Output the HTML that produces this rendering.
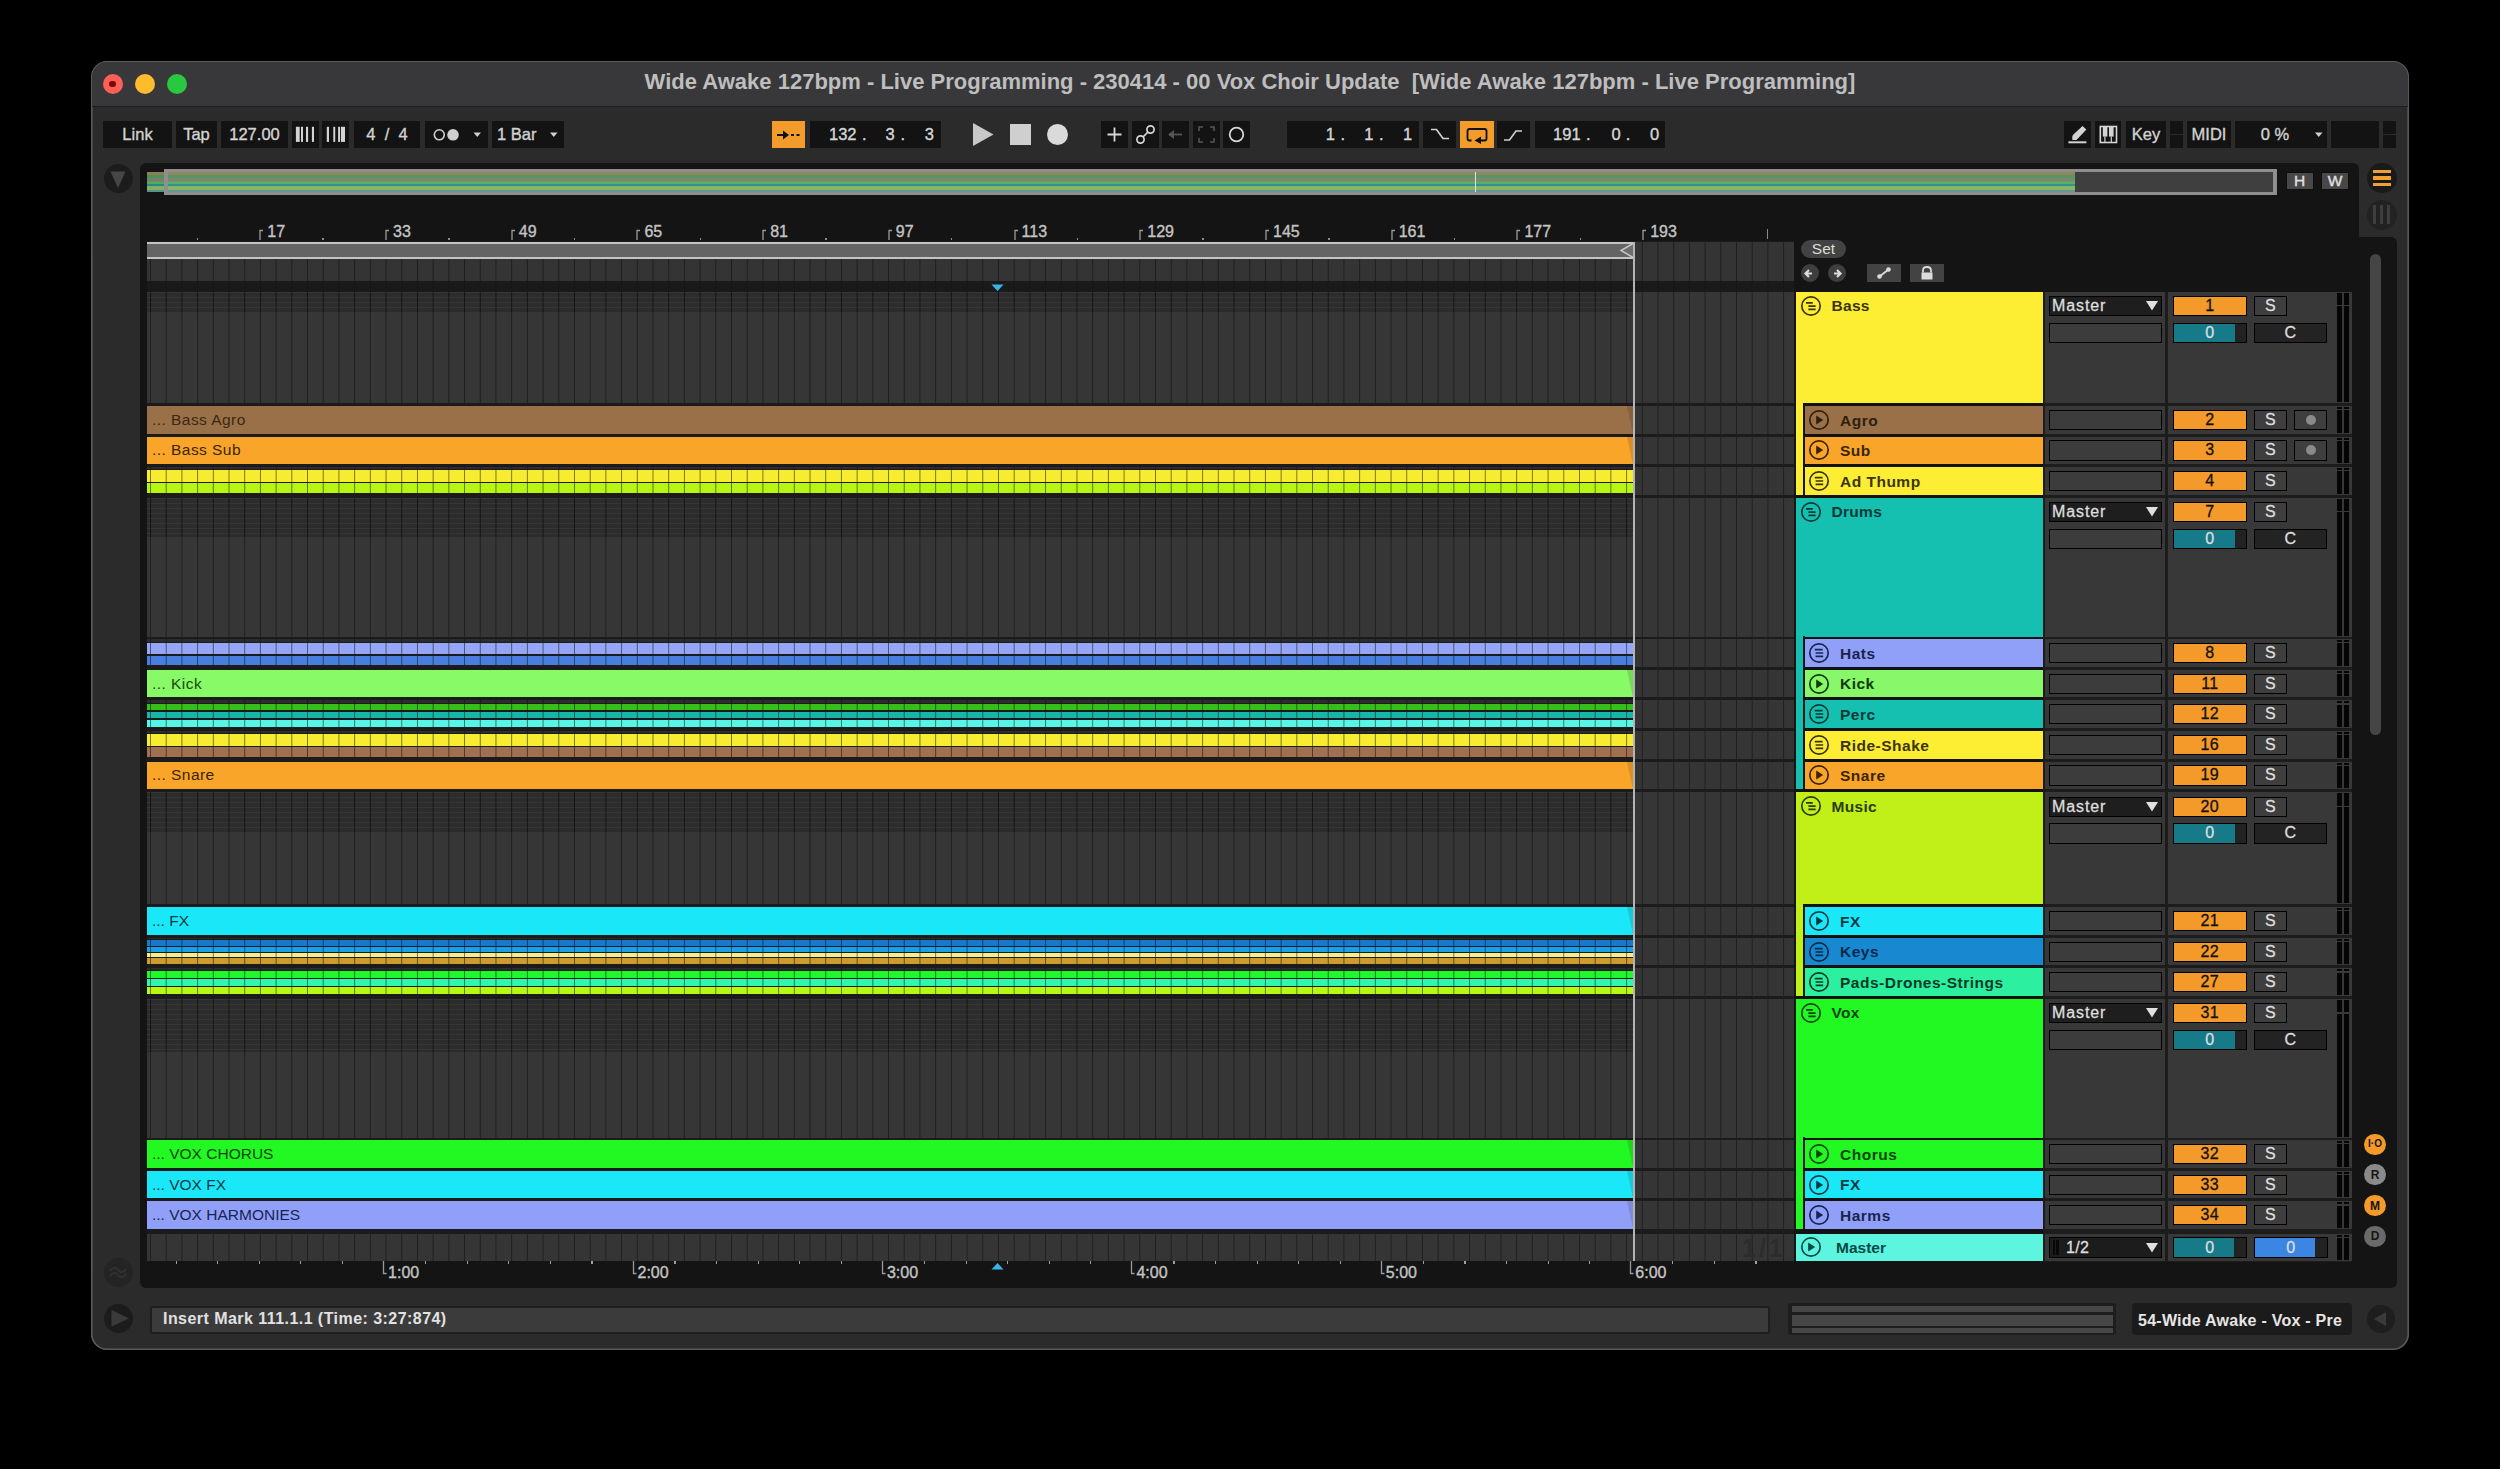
<!DOCTYPE html>
<html><head><meta charset="utf-8"><style>
*{margin:0;padding:0;box-sizing:border-box}
html,body{width:2500px;height:1469px;overflow:hidden;background:#000}
body{position:relative;font-family:"Liberation Sans", sans-serif;}
div{position:absolute}
svg{position:absolute;overflow:visible}
.t{white-space:nowrap;line-height:1}
.m{-webkit-text-stroke:0.35px currentColor}
.tb{background:#131313}
.lbl{color:#d2d2d2;font-size:16px;display:flex;align-items:center;justify-content:center}
</style></head><body>

<div style="left:91px;top:61px;width:2318px;height:1289px;background:#2b2b2b;border-radius:16px;box-shadow:inset 0 0 0 1.6px #5a5a5a;"></div>
<div style="left:92px;top:62px;width:2316px;height:44px;background:#38373a;border-radius:15px 15px 0 0;"></div>
<div style="left:92px;top:106px;width:2316px;height:1px;background:#1d1d1d;"></div>
<div style="left:102.6px;top:74px;width:20px;height:20px;background:#fe5f57;border-radius:50%;"></div>
<div style="left:135px;top:74px;width:20px;height:20px;background:#febc2e;border-radius:50%;"></div>
<div style="left:167.3px;top:74px;width:20px;height:20px;background:#28c840;border-radius:50%;"></div>
<div style="left:109.39999999999999px;top:80.8px;width:6.4px;height:6.4px;background:#7e0a06;border-radius:50%;"></div>
<div class="t" style="left:0;top:71px;width:2500px;text-align:center;font-size:22px;font-weight:bold;color:#bebebe;padding-left:0px">Wide Awake 127bpm - Live Programming - 230414 - 00 Vox Choir Update&nbsp; [Wide Awake 127bpm - Live Programming]</div>
<div style="left:140px;top:163px;width:2219px;height:80px;background:#141414;border-radius:6px 6px 0 0;"></div>
<div style="left:140px;top:237px;width:2257px;height:1050.5px;background:#141414;border-radius:0 6px 6px 6px;"></div>
<div style="left:103.5px;top:163.5px;width:29.0px;height:29.0px;background:#1c1c1c;border-radius:50%;"></div>
<svg style="left:104px;top:164px" width="28" height="28"><path d="M6.5 7.5 L21.5 7.5 L14.5 23 Q14 24 13.5 23 Z" fill="#464646"/></svg>
<div style="left:103.5px;top:1258.0px;width:29.0px;height:29.0px;background:#242424;border-radius:50%;"></div>
<svg style="left:104px;top:1258px" width="28" height="28"><path d="M6 13 C9 9,12 9,14 12 C16 15,19 15,22 11 M6 18 C9 14,12 14,14 17 C16 20,19 20,22 16" stroke="#323232" stroke-width="2" fill="none"/></svg>
<div style="left:103.5px;top:1304.0px;width:29.0px;height:29.0px;background:#1c1c1c;border-radius:50%;"></div>
<svg style="left:104px;top:1304px" width="28" height="28"><path d="M7.5 6 L25 14.5 L7.5 22.5 Z" fill="#3a3a3a"/></svg>
<div style="left:2366.5px;top:163px;width:30px;height:30px;background:#1a1a1a;border-radius:50%;"></div>
<div style="left:2372.5px;top:169.9px;width:18.5px;height:3.2px;background:#f0a030;"></div>
<div style="left:2372.5px;top:176.4px;width:18.5px;height:3.2px;background:#f0a030;"></div>
<div style="left:2372.5px;top:182.9px;width:18.5px;height:3.2px;background:#f0a030;"></div>
<div style="left:2366.5px;top:199.7px;width:30px;height:30px;background:#222222;border-radius:50%;"></div>
<div style="left:2373.2px;top:205px;width:2.6px;height:19px;background:#3e3e3e;"></div>
<div style="left:2380.2px;top:205px;width:2.6px;height:19px;background:#3e3e3e;"></div>
<div style="left:2387.2px;top:205px;width:2.6px;height:19px;background:#3e3e3e;"></div>
<div style="left:103px;top:121px;width:69px;height:27px;background:#131313;"></div>
<div class="t" style="left:103px;top:121px;width:69px;height:27px;display:flex;align-items:center;justify-content:center;font-size:16.5px;color:#d2d2d2;font-weight:normal;padding:0 0px;-webkit-text-stroke:0.35px currentColor;letter-spacing:0px">Link</div>
<div style="left:176px;top:121px;width:41px;height:27px;background:#131313;"></div>
<div class="t" style="left:176px;top:121px;width:41px;height:27px;display:flex;align-items:center;justify-content:center;font-size:16.5px;color:#d2d2d2;font-weight:normal;padding:0 0px;-webkit-text-stroke:0.35px currentColor;letter-spacing:0px">Tap</div>
<div style="left:221px;top:121px;width:67px;height:27px;background:#131313;"></div>
<div class="t" style="left:221px;top:121px;width:67px;height:27px;display:flex;align-items:center;justify-content:center;font-size:16.5px;color:#d2d2d2;font-weight:normal;padding:0 0px;-webkit-text-stroke:0.35px currentColor;letter-spacing:0px">127.00</div>
<div style="left:292px;top:121px;width:27px;height:27px;background:#131313;"></div>
<svg style="left:292px;top:121px" width="27" height="27"><rect x="3.9" y="5.8" width="3.8" height="15.1" fill="#d4d4d4"/><rect x="9" y="5.8" width="2" height="15.1" fill="#d4d4d4"/><rect x="14" y="5.8" width="2.1" height="15.1" fill="#d4d4d4"/><rect x="19.9" y="5.8" width="2.1" height="15.1" fill="#d4d4d4"/></svg>
<div style="left:322px;top:121px;width:27px;height:27px;background:#131313;"></div>
<svg style="left:322px;top:121px" width="27" height="27"><rect x="4.8" y="5.8" width="2.2" height="15.1" fill="#d4d4d4"/><rect x="11.3" y="5.8" width="1.9" height="15.1" fill="#d4d4d4"/><rect x="16.1" y="5.8" width="1.9" height="15.1" fill="#d4d4d4"/><rect x="18.9" y="5.8" width="4.1" height="15.1" fill="#d4d4d4"/></svg>
<div style="left:354px;top:121px;width:66px;height:27px;background:#131313;"></div>
<div class="t" style="left:354px;top:121px;width:66px;height:27px;display:flex;align-items:center;justify-content:center;font-size:16.5px;color:#d2d2d2;font-weight:normal;padding:0 0px;-webkit-text-stroke:0.35px currentColor;letter-spacing:0px">4&nbsp;&nbsp;/&nbsp;&nbsp;4</div>
<div style="left:425px;top:121px;width:63px;height:27px;background:#131313;"></div>
<svg style="left:425px;top:121px" width="63" height="27"><circle cx="14.3" cy="13.8" r="5" stroke="#d0d0d0" stroke-width="1.6" fill="none"/><circle cx="28" cy="13.8" r="5.8" fill="#d0d0d0"/><path d="M48.5 11.5 L56 11.5 L52.25 16 Z" fill="#d0d0d0"/></svg>
<div style="left:492px;top:121px;width:72px;height:27px;background:#131313;"></div>
<div class="t" style="left:497px;top:121px;width:48px;height:27px;display:flex;align-items:center;justify-content:flex-start;font-size:16.5px;color:#d2d2d2;font-weight:normal;padding:0 0px;-webkit-text-stroke:0.35px currentColor;letter-spacing:0px">1 Bar</div>
<svg style="left:492px;top:121px" width="72" height="27"><path d="M58 11.5 L65.5 11.5 L61.75 16 Z" fill="#d0d0d0"/></svg>
<div style="left:772px;top:121px;width:33px;height:27px;background:#f39c2b;"></div>
<svg style="left:772px;top:121px" width="33" height="27"><path d="M5 14 L14 14" stroke="#111" stroke-width="2"/><path d="M11 9.5 L17 14 L11 18.5 Z" fill="#111"/><path d="M19 14 L22 14 M24.5 14 L27.5 14" stroke="#111" stroke-width="1.8"/></svg>
<div style="left:810px;top:121px;width:131px;height:27px;background:#131313;"></div>
<div class="t m" style="left:796.5px;top:121px;width:60px;height:27px;display:flex;align-items:center;justify-content:flex-end;font-size:16.5px;color:#d6d6d6;">132</div><div class="t m" style="left:806.5px;top:121px;width:60px;height:27px;display:flex;align-items:center;justify-content:flex-end;font-size:16.5px;color:#d6d6d6;">.</div><div class="t m" style="left:834.8px;top:121px;width:60px;height:27px;display:flex;align-items:center;justify-content:flex-end;font-size:16.5px;color:#d6d6d6;">3</div><div class="t m" style="left:845.0px;top:121px;width:60px;height:27px;display:flex;align-items:center;justify-content:flex-end;font-size:16.5px;color:#d6d6d6;">.</div><div class="t m" style="left:874.0px;top:121px;width:60px;height:27px;display:flex;align-items:center;justify-content:flex-end;font-size:16.5px;color:#d6d6d6;">3</div>
<svg style="left:972px;top:122px" width="24" height="26"><path d="M1 1 L21.5 12.5 L1 24 Z" fill="#c8c8c8"/></svg>
<div style="left:1010px;top:124px;width:21px;height:21px;background:#cfcfcf;"></div>
<div style="left:1046.9px;top:124.0px;width:21.0px;height:21.0px;background:#dadada;border-radius:50%;"></div>
<div style="left:1101px;top:121px;width:27px;height:27px;background:#131313;"></div>
<div style="left:1131.5px;top:121px;width:27.0px;height:27px;background:#131313;"></div>
<div style="left:1162px;top:121px;width:27px;height:27px;background:#131313;"></div>
<div style="left:1192.5px;top:121px;width:27.0px;height:27px;background:#131313;"></div>
<div style="left:1223px;top:121px;width:27px;height:27px;background:#131313;"></div>
<svg style="left:1101px;top:121px" width="27" height="27"><path d="M13.5 6.5 V20.5 M6.5 13.5 H20.5" stroke="#d8d8d8" stroke-width="1.8"/></svg>
<svg style="left:1131.5px;top:121px" width="27" height="27"><circle cx="8.5" cy="18.5" r="3.6" stroke="#d8d8d8" stroke-width="1.7" fill="none"/><circle cx="18.5" cy="8.5" r="3.6" stroke="#d8d8d8" stroke-width="1.7" fill="none"/><path d="M11 16 L16 11" stroke="#d8d8d8" stroke-width="1.7"/></svg>
<svg style="left:1162px;top:121px" width="27" height="27"><path d="M7 13.5 H20" stroke="#555" stroke-width="1.8"/><path d="M6 13.5 L12 9 L12 18 Z" fill="#555"/></svg>
<svg style="left:1192.5px;top:121px" width="27" height="27"><path d="M6 10 V6 H10 M17 6 H21 V10 M21 17 V21 H17 M10 21 H6 V17" stroke="#555" stroke-width="1.6" fill="none"/></svg>
<svg style="left:1223px;top:121px" width="27" height="27"><circle cx="13.5" cy="13.5" r="6.8" stroke="#d8d8d8" stroke-width="1.8" fill="none"/></svg>
<div style="left:1287px;top:121px;width:132px;height:27px;background:#131313;"></div>
<div class="t m" style="left:1275.0px;top:121px;width:60px;height:27px;display:flex;align-items:center;justify-content:flex-end;font-size:16.5px;color:#d6d6d6;">1</div><div class="t m" style="left:1285.0px;top:121px;width:60px;height:27px;display:flex;align-items:center;justify-content:flex-end;font-size:16.5px;color:#d6d6d6;">.</div><div class="t m" style="left:1313.5px;top:121px;width:60px;height:27px;display:flex;align-items:center;justify-content:flex-end;font-size:16.5px;color:#d6d6d6;">1</div><div class="t m" style="left:1323.5px;top:121px;width:60px;height:27px;display:flex;align-items:center;justify-content:flex-end;font-size:16.5px;color:#d6d6d6;">.</div><div class="t m" style="left:1352.2px;top:121px;width:60px;height:27px;display:flex;align-items:center;justify-content:flex-end;font-size:16.5px;color:#d6d6d6;">1</div>
<div style="left:1422.5px;top:121px;width:33.5px;height:27px;background:#131313;"></div>
<svg style="left:1422.5px;top:121px" width="34" height="27"><path d="M8 8.5 H13.5 L20 17.5 H26" stroke="#d0d0d0" stroke-width="1.7" fill="none"/></svg>
<div style="left:1459.5px;top:121px;width:34.0px;height:27px;background:#f39c2b;"></div>
<svg style="left:1459.5px;top:121px" width="34" height="27"><path d="M11.5 19.5 H9.5 Q7.5 19.5 7.5 17.5 V10 Q7.5 8 9.5 8 H24.5 Q26.5 8 26.5 10 V17.5 Q26.5 19.5 24.5 19.5 H19" stroke="#111" stroke-width="1.8" fill="none"/><path d="M21 15.5 L14.5 19.5 L21 23 Z" fill="#111"/></svg>
<div style="left:1497px;top:121px;width:32.5px;height:27px;background:#131313;"></div>
<svg style="left:1497px;top:121px" width="33" height="27"><path d="M7 19 H12.5 L19 10 H25" stroke="#d0d0d0" stroke-width="1.7" fill="none"/></svg>
<div style="left:1534.5px;top:121px;width:130.5px;height:27px;background:#131313;"></div>
<div class="t m" style="left:1520.6px;top:121px;width:60px;height:27px;display:flex;align-items:center;justify-content:flex-end;font-size:16.5px;color:#d6d6d6;">191</div><div class="t m" style="left:1530.6px;top:121px;width:60px;height:27px;display:flex;align-items:center;justify-content:flex-end;font-size:16.5px;color:#d6d6d6;">.</div><div class="t m" style="left:1560.6px;top:121px;width:60px;height:27px;display:flex;align-items:center;justify-content:flex-end;font-size:16.5px;color:#d6d6d6;">0</div><div class="t m" style="left:1570.4px;top:121px;width:60px;height:27px;display:flex;align-items:center;justify-content:flex-end;font-size:16.5px;color:#d6d6d6;">.</div><div class="t m" style="left:1599.2px;top:121px;width:60px;height:27px;display:flex;align-items:center;justify-content:flex-end;font-size:16.5px;color:#d6d6d6;">0</div>
<div style="left:2063.5px;top:121px;width:27.5px;height:27px;background:#131313;"></div>
<svg style="left:2063.5px;top:121px" width="28" height="27"><path d="M8.3 18.9 L12.5 18.9 L22.4 8.4 L18.5 5 L10.2 12.8 Q8.3 14.2 8.3 15.5 Z" fill="#d2d2d2"/><path d="M4.4 21.3 H22.4" stroke="#d2d2d2" stroke-width="2"/></svg>
<div style="left:2094.5px;top:121px;width:26.0px;height:27px;background:#131313;"></div>
<svg style="left:2094.5px;top:121px" width="26" height="27"><rect x="5.3" y="5.5" width="16.2" height="16" stroke="#d4d4d4" stroke-width="1.6" fill="#111"/><rect x="7.8" y="6" width="4.6" height="9.6" fill="#d2d2d2"/><rect x="14" y="6" width="4.6" height="9.6" fill="#d2d2d2"/><path d="M9.9 15.6 V21 M16.3 15.6 V21" stroke="#d2d2d2" stroke-width="1.2"/></svg>
<div style="left:2126px;top:121px;width:40px;height:27px;background:#131313;"></div>
<div class="t" style="left:2126px;top:121px;width:40px;height:27px;display:flex;align-items:center;justify-content:center;font-size:16.5px;color:#d2d2d2;font-weight:normal;padding:0 0px;-webkit-text-stroke:0.35px currentColor;letter-spacing:0px">Key</div>
<div style="left:2170px;top:121px;width:12.5px;height:27px;background:#131313;border-bottom:0;"></div>
<div style="left:2170px;top:134px;width:12.5px;height:1px;background:#2b2b2b;"></div>
<div style="left:2187px;top:121px;width:44px;height:27px;background:#131313;"></div>
<div class="t" style="left:2187px;top:121px;width:44px;height:27px;display:flex;align-items:center;justify-content:center;font-size:16.5px;color:#d2d2d2;font-weight:normal;padding:0 0px;-webkit-text-stroke:0.35px currentColor;letter-spacing:0px">MIDI</div>
<div style="left:2235px;top:121px;width:92px;height:27px;background:#131313;"></div>
<div class="t" style="left:2250px;top:121px;width:50px;height:27px;display:flex;align-items:center;justify-content:center;font-size:16.5px;color:#d2d2d2;font-weight:normal;padding:0 0px;-webkit-text-stroke:0.35px currentColor;letter-spacing:0px">0&nbsp;%</div>
<svg style="left:2235px;top:121px" width="92" height="27"><path d="M80 11.5 L87.5 11.5 L83.75 16 Z" fill="#d0d0d0"/></svg>
<div style="left:2331px;top:121px;width:48px;height:27px;background:#131313;"></div>
<div style="left:2383px;top:121px;width:12.5px;height:27px;background:#131313;"></div>
<div style="left:2383px;top:134px;width:12.5px;height:1px;background:#2b2b2b;"></div>
<div style="left:146.5px;top:172.2px;width:1929px;height:19.8px;background:linear-gradient(180deg,#8a8050 0.0px 2.8px,#4a9060 2.8px 6.0px,#7a8060 6.0px 8.6px,#6a9070 8.6px 9.8px,#4ab058 9.8px 11.8px,#2a8888 11.8px 13.8px,#70b070 13.8px 15.0px,#88b058 15.0px 17.8px,#5a9090 17.8px 19.8px);"></div>
<div style="left:2075px;top:172.2px;width:200px;height:19.8px;background:#333333;"></div>
<div style="left:164px;top:169px;width:2113px;height:26px;border:3px solid #8f8f8f;border-left-width:4px;border-right-width:4px;background:rgba(255,255,255,0.06);"></div>
<div style="left:1474.5px;top:172px;width:1.5px;height:20px;background:#e0e0e0;"></div>
<div style="left:2285.5px;top:171.8px;width:28px;height:18.5px;background:#484848;border:1px solid #0e0e0e;"><div class="t m" style="position:static;font-size:15.5px;color:#e0e0e0;text-align:center;line-height:16.5px">H</div></div>
<div style="left:2321px;top:171.8px;width:28px;height:18.5px;background:#484848;border:1px solid #0e0e0e;"><div class="t m" style="position:static;font-size:15.5px;color:#e0e0e0;text-align:center;line-height:16.5px">W</div></div>
<svg style="left:259.31px;top:229px" width="6" height="11"><path d="M1 11 V1.5 H4" stroke="#9a9a9a" stroke-width="1.3" fill="none"/></svg>
<div class="t m" style="left:267.31px;top:223.5px;font-size:16px;color:#c4c4c4;">17</div>
<svg style="left:385.02px;top:229px" width="6" height="11"><path d="M1 11 V1.5 H4" stroke="#9a9a9a" stroke-width="1.3" fill="none"/></svg>
<div class="t m" style="left:393.02px;top:223.5px;font-size:16px;color:#c4c4c4;">33</div>
<svg style="left:510.74px;top:229px" width="6" height="11"><path d="M1 11 V1.5 H4" stroke="#9a9a9a" stroke-width="1.3" fill="none"/></svg>
<div class="t m" style="left:518.74px;top:223.5px;font-size:16px;color:#c4c4c4;">49</div>
<svg style="left:636.45px;top:229px" width="6" height="11"><path d="M1 11 V1.5 H4" stroke="#9a9a9a" stroke-width="1.3" fill="none"/></svg>
<div class="t m" style="left:644.45px;top:223.5px;font-size:16px;color:#c4c4c4;">65</div>
<svg style="left:762.16px;top:229px" width="6" height="11"><path d="M1 11 V1.5 H4" stroke="#9a9a9a" stroke-width="1.3" fill="none"/></svg>
<div class="t m" style="left:770.16px;top:223.5px;font-size:16px;color:#c4c4c4;">81</div>
<svg style="left:887.87px;top:229px" width="6" height="11"><path d="M1 11 V1.5 H4" stroke="#9a9a9a" stroke-width="1.3" fill="none"/></svg>
<div class="t m" style="left:895.87px;top:223.5px;font-size:16px;color:#c4c4c4;">97</div>
<svg style="left:1013.58px;top:229px" width="6" height="11"><path d="M1 11 V1.5 H4" stroke="#9a9a9a" stroke-width="1.3" fill="none"/></svg>
<div class="t m" style="left:1021.58px;top:223.5px;font-size:16px;color:#c4c4c4;">113</div>
<svg style="left:1139.30px;top:229px" width="6" height="11"><path d="M1 11 V1.5 H4" stroke="#9a9a9a" stroke-width="1.3" fill="none"/></svg>
<div class="t m" style="left:1147.30px;top:223.5px;font-size:16px;color:#c4c4c4;">129</div>
<svg style="left:1265.01px;top:229px" width="6" height="11"><path d="M1 11 V1.5 H4" stroke="#9a9a9a" stroke-width="1.3" fill="none"/></svg>
<div class="t m" style="left:1273.01px;top:223.5px;font-size:16px;color:#c4c4c4;">145</div>
<svg style="left:1390.72px;top:229px" width="6" height="11"><path d="M1 11 V1.5 H4" stroke="#9a9a9a" stroke-width="1.3" fill="none"/></svg>
<div class="t m" style="left:1398.72px;top:223.5px;font-size:16px;color:#c4c4c4;">161</div>
<svg style="left:1516.43px;top:229px" width="6" height="11"><path d="M1 11 V1.5 H4" stroke="#9a9a9a" stroke-width="1.3" fill="none"/></svg>
<div class="t m" style="left:1524.43px;top:223.5px;font-size:16px;color:#c4c4c4;">177</div>
<svg style="left:1642.14px;top:229px" width="6" height="11"><path d="M1 11 V1.5 H4" stroke="#9a9a9a" stroke-width="1.3" fill="none"/></svg>
<div class="t m" style="left:1650.14px;top:223.5px;font-size:16px;color:#c4c4c4;">193</div>
<div style="left:196.756px;top:237.5px;width:1.4px;height:2px;background:#8a8a8a;"></div>
<div style="left:322.468px;top:237.5px;width:1.4px;height:2px;background:#8a8a8a;"></div>
<div style="left:448.18px;top:237.5px;width:1.4px;height:2px;background:#8a8a8a;"></div>
<div style="left:573.8919999999999px;top:237.5px;width:1.4px;height:2px;background:#8a8a8a;"></div>
<div style="left:699.604px;top:237.5px;width:1.4px;height:2px;background:#8a8a8a;"></div>
<div style="left:825.316px;top:237.5px;width:1.4px;height:2px;background:#8a8a8a;"></div>
<div style="left:951.028px;top:237.5px;width:1.4px;height:2px;background:#8a8a8a;"></div>
<div style="left:1076.74px;top:237.5px;width:1.4px;height:2px;background:#8a8a8a;"></div>
<div style="left:1202.452px;top:237.5px;width:1.4px;height:2px;background:#8a8a8a;"></div>
<div style="left:1328.164px;top:237.5px;width:1.4px;height:2px;background:#8a8a8a;"></div>
<div style="left:1453.876px;top:237.5px;width:1.4px;height:2px;background:#8a8a8a;"></div>
<div style="left:1579.588px;top:237.5px;width:1.4px;height:2px;background:#8a8a8a;"></div>
<div style="left:1767px;top:229px;width:1.4px;height:10px;background:#8a8a8a;"></div>
<div style="left:146.5px;top:241px;width:1647.0px;height:1020px;background:#1b1b1b;"></div>
<div style="left:146.5px;top:241.5px;width:1647.0px;height:39.5px;background:linear-gradient(90deg, rgba(0,0,0,0.42) 0 1.35px, transparent 1.35px) 3.00px 0/15.714px 100% repeat-x,#343434;"></div>
<div style="left:146.5px;top:281px;width:1647.0px;height:10.5px;background:linear-gradient(90deg, rgba(0,0,0,0.12) 0 1.35px, transparent 1.35px) 3.00px 0/15.714px 100% repeat-x,#1a1a1a;"></div>
<div style="left:147.0px;top:242px;width:1487.0px;height:17px;background:#646464;border-top:2px solid #c4c4c4;border-bottom:2px solid #c4c4c4;"></div>
<svg style="left:1618px;top:242px" width="17" height="17"><path d="M16 1 L3 8.5 L16 16" stroke="#c4c4c4" stroke-width="1.5" fill="#6e6e6e"/></svg>
<div style="left:146.5px;top:291.5px;width:1647.0px;height:111.5px;background:linear-gradient(90deg, rgba(0,0,0,0.42) 0 1.35px, transparent 1.35px) 3.00px 0/15.714px 100% repeat-x,#363636;"></div>
<div style="left:146.5px;top:291.5px;width:1486.5px;height:21px;background:linear-gradient(90deg, rgba(0,0,0,0.55) 0 1.35px, transparent 1.35px) 3.00px 0/15.714px 100% repeat-x,repeating-linear-gradient(180deg, rgba(255,255,255,0.05) 0 1px, transparent 1px 5px),#2c2c2c;"></div>
<div style="left:146.5px;top:406px;width:1647.0px;height:27.5px;background:linear-gradient(90deg, rgba(0,0,0,0.42) 0 1.35px, transparent 1.35px) 3.00px 0/15.714px 100% repeat-x,#353535;"></div>
<div style="left:146.5px;top:406px;width:1486.5px;height:27.5px;background:#9a7049;"><div class="t" style="left:5.5px;top:5.8px;font-size:15.5px;letter-spacing:0.45px;color:#3a2810">... Bass Agro</div></div>
<svg style="left:1625.0px;top:406.0px" width="8" height="27.5"><path d="M2 0 L8 0 L8 27.5 Z" fill="rgba(0,0,0,0.13)"/></svg>
<div style="left:146.5px;top:436.6px;width:1647.0px;height:27.5px;background:linear-gradient(90deg, rgba(0,0,0,0.42) 0 1.35px, transparent 1.35px) 3.00px 0/15.714px 100% repeat-x,#353535;"></div>
<div style="left:146.5px;top:436.6px;width:1486.5px;height:27.5px;background:#f9a52a;"><div class="t" style="left:5.5px;top:5.8px;font-size:15.5px;letter-spacing:0.45px;color:#3a2408">... Bass Sub</div></div>
<svg style="left:1625.0px;top:436.6px" width="8" height="27.5"><path d="M2 0 L8 0 L8 27.5 Z" fill="rgba(0,0,0,0.13)"/></svg>
<div style="left:146.5px;top:467.20000000000005px;width:1647.0px;height:27.5px;background:linear-gradient(90deg, rgba(0,0,0,0.42) 0 1.35px, transparent 1.35px) 3.00px 0/15.714px 100% repeat-x,#353535;"></div>
<div style="left:146.5px;top:467.20000000000005px;width:1486.5px;height:27.5px;background:#1b1b1b;"></div>
<div style="left:146.5px;top:467.20000000000005px;width:1486.5px;height:2.1px;background:linear-gradient(90deg, rgba(0,0,0,0.42) 0 1.35px, transparent 1.35px) 3.00px 0/15.714px 100% repeat-x,#2c2e2e;"></div>
<div style="left:146.5px;top:470.30000000000007px;width:1486.5px;height:11.6px;background:linear-gradient(90deg, rgba(0,0,0,0.5) 0 1.25px, transparent 1.25px) 3.00px 0/15.714px 100% repeat-x,#f8ec30;"></div>
<div style="left:146.5px;top:483.30000000000007px;width:1486.5px;height:9.599999999999998px;background:linear-gradient(90deg, rgba(0,0,0,0.5) 0 1.25px, transparent 1.25px) 3.00px 0/15.714px 100% repeat-x,#b6f612;"></div>
<div style="left:146.5px;top:497.5px;width:1647.0px;height:139px;background:linear-gradient(90deg, rgba(0,0,0,0.42) 0 1.35px, transparent 1.35px) 3.00px 0/15.714px 100% repeat-x,#363636;"></div>
<div style="left:146.5px;top:497.5px;width:1486.5px;height:39px;background:linear-gradient(90deg, rgba(0,0,0,0.55) 0 1.35px, transparent 1.35px) 3.00px 0/15.714px 100% repeat-x,repeating-linear-gradient(180deg, rgba(255,255,255,0.05) 0 1px, transparent 1px 5px),#2c2c2c;"></div>
<div style="left:146.5px;top:639.2px;width:1647.0px;height:27.5px;background:linear-gradient(90deg, rgba(0,0,0,0.42) 0 1.35px, transparent 1.35px) 3.00px 0/15.714px 100% repeat-x,#353535;"></div>
<div style="left:146.5px;top:639.2px;width:1486.5px;height:27.5px;background:#1b1b1b;"></div>
<div style="left:146.5px;top:639.2px;width:1486.5px;height:2.7px;background:linear-gradient(90deg, rgba(0,0,0,0.42) 0 1.35px, transparent 1.35px) 3.00px 0/15.714px 100% repeat-x,#2c2e2e;"></div>
<div style="left:146.5px;top:642.9000000000001px;width:1486.5px;height:11.100000000000001px;background:linear-gradient(90deg, rgba(0,0,0,0.5) 0 1.25px, transparent 1.25px) 3.00px 0/15.714px 100% repeat-x,#96a6f6;"></div>
<div style="left:146.5px;top:655.7px;width:1486.5px;height:9.5px;background:linear-gradient(90deg, rgba(0,0,0,0.5) 0 1.25px, transparent 1.25px) 3.00px 0/15.714px 100% repeat-x,#4a7ede;"></div>
<div style="left:146.5px;top:669.8000000000001px;width:1647.0px;height:27.5px;background:linear-gradient(90deg, rgba(0,0,0,0.42) 0 1.35px, transparent 1.35px) 3.00px 0/15.714px 100% repeat-x,#353535;"></div>
<div style="left:146.5px;top:669.8000000000001px;width:1486.5px;height:27.5px;background:#88fa68;"><div class="t" style="left:5.5px;top:5.8px;font-size:15.5px;letter-spacing:0.45px;color:#1a4a0c">... Kick</div></div>
<svg style="left:1625.0px;top:669.8px" width="8" height="27.5"><path d="M2 0 L8 0 L8 27.5 Z" fill="rgba(0,0,0,0.13)"/></svg>
<div style="left:146.5px;top:700.4000000000001px;width:1647.0px;height:27.5px;background:linear-gradient(90deg, rgba(0,0,0,0.42) 0 1.35px, transparent 1.35px) 3.00px 0/15.714px 100% repeat-x,#353535;"></div>
<div style="left:146.5px;top:700.4000000000001px;width:1486.5px;height:27.5px;background:#1b1b1b;"></div>
<div style="left:146.5px;top:700.4000000000001px;width:1486.5px;height:2.4px;background:linear-gradient(90deg, rgba(0,0,0,0.42) 0 1.35px, transparent 1.35px) 3.00px 0/15.714px 100% repeat-x,#2c2e2e;"></div>
<div style="left:146.5px;top:703.8000000000001px;width:1486.5px;height:6.4px;background:linear-gradient(90deg, rgba(0,0,0,0.5) 0 1.25px, transparent 1.25px) 3.00px 0/15.714px 100% repeat-x,#38be18;"></div>
<div style="left:146.5px;top:712.0000000000001px;width:1486.5px;height:6.4px;background:linear-gradient(90deg, rgba(0,0,0,0.5) 0 1.25px, transparent 1.25px) 3.00px 0/15.714px 100% repeat-x,#16b6a8;"></div>
<div style="left:146.5px;top:720.4000000000001px;width:1486.5px;height:6.199999999999999px;background:linear-gradient(90deg, rgba(0,0,0,0.5) 0 1.25px, transparent 1.25px) 3.00px 0/15.714px 100% repeat-x,#56f6e6;"></div>
<div style="left:146.5px;top:731.0000000000001px;width:1647.0px;height:27.5px;background:linear-gradient(90deg, rgba(0,0,0,0.42) 0 1.35px, transparent 1.35px) 3.00px 0/15.714px 100% repeat-x,#353535;"></div>
<div style="left:146.5px;top:731.0000000000001px;width:1486.5px;height:27.5px;background:#1b1b1b;"></div>
<div style="left:146.5px;top:731.0000000000001px;width:1486.5px;height:1.9px;background:linear-gradient(90deg, rgba(0,0,0,0.42) 0 1.35px, transparent 1.35px) 3.00px 0/15.714px 100% repeat-x,#2c2e2e;"></div>
<div style="left:146.5px;top:733.9000000000001px;width:1486.5px;height:12.0px;background:linear-gradient(90deg, rgba(0,0,0,0.5) 0 1.25px, transparent 1.25px) 3.00px 0/15.714px 100% repeat-x,#f6ec30;"></div>
<div style="left:146.5px;top:747.2000000000002px;width:1486.5px;height:9.8px;background:linear-gradient(90deg, rgba(0,0,0,0.5) 0 1.25px, transparent 1.25px) 3.00px 0/15.714px 100% repeat-x,#a07050;"></div>
<div style="left:146.5px;top:761.6000000000001px;width:1647.0px;height:27.5px;background:linear-gradient(90deg, rgba(0,0,0,0.42) 0 1.35px, transparent 1.35px) 3.00px 0/15.714px 100% repeat-x,#353535;"></div>
<div style="left:146.5px;top:761.6000000000001px;width:1486.5px;height:27.5px;background:#f9a52a;"><div class="t" style="left:5.5px;top:5.8px;font-size:15.5px;letter-spacing:0.45px;color:#3a2408">... Snare</div></div>
<svg style="left:1625.0px;top:761.6px" width="8" height="27.5"><path d="M2 0 L8 0 L8 27.5 Z" fill="rgba(0,0,0,0.13)"/></svg>
<div style="left:146.5px;top:792.2px;width:1647.0px;height:112px;background:linear-gradient(90deg, rgba(0,0,0,0.42) 0 1.35px, transparent 1.35px) 3.00px 0/15.714px 100% repeat-x,#363636;"></div>
<div style="left:146.5px;top:792.2px;width:1486.5px;height:40px;background:linear-gradient(90deg, rgba(0,0,0,0.55) 0 1.35px, transparent 1.35px) 3.00px 0/15.714px 100% repeat-x,repeating-linear-gradient(180deg, rgba(255,255,255,0.05) 0 1px, transparent 1px 5px),#2c2c2c;"></div>
<div style="left:146.5px;top:907.2px;width:1647.0px;height:27.5px;background:linear-gradient(90deg, rgba(0,0,0,0.42) 0 1.35px, transparent 1.35px) 3.00px 0/15.714px 100% repeat-x,#353535;"></div>
<div style="left:146.5px;top:907.2px;width:1486.5px;height:27.5px;background:#1ae8f8;"><div class="t" style="left:5.5px;top:5.8px;font-size:15.5px;letter-spacing:0px;color:#073a44">... FX</div></div>
<svg style="left:1625.0px;top:907.2px" width="8" height="27.5"><path d="M2 0 L8 0 L8 27.5 Z" fill="rgba(0,0,0,0.13)"/></svg>
<div style="left:146.5px;top:937.8000000000001px;width:1647.0px;height:27.5px;background:linear-gradient(90deg, rgba(0,0,0,0.42) 0 1.35px, transparent 1.35px) 3.00px 0/15.714px 100% repeat-x,#353535;"></div>
<div style="left:146.5px;top:937.8000000000001px;width:1486.5px;height:27.5px;background:#1b1b1b;"></div>
<div style="left:146.5px;top:937.8000000000001px;width:1486.5px;height:1px;background:linear-gradient(90deg, rgba(0,0,0,0.42) 0 1.35px, transparent 1.35px) 3.00px 0/15.714px 100% repeat-x,#2c2e2e;"></div>
<div style="left:146.5px;top:939.8000000000001px;width:1486.5px;height:5.9px;background:linear-gradient(90deg, rgba(0,0,0,0.5) 0 1.25px, transparent 1.25px) 3.00px 0/15.714px 100% repeat-x,#1a78c8;"></div>
<div style="left:146.5px;top:947.0000000000001px;width:1486.5px;height:5.0px;background:linear-gradient(90deg, rgba(0,0,0,0.5) 0 1.25px, transparent 1.25px) 3.00px 0/15.714px 100% repeat-x,#18a0ea;"></div>
<div style="left:146.5px;top:953.3000000000001px;width:1486.5px;height:3.6000000000000014px;background:linear-gradient(90deg, rgba(0,0,0,0.5) 0 1.25px, transparent 1.25px) 3.00px 0/15.714px 100% repeat-x,#f6ee88;"></div>
<div style="left:146.5px;top:957.8000000000001px;width:1486.5px;height:5.899999999999999px;background:linear-gradient(90deg, rgba(0,0,0,0.5) 0 1.25px, transparent 1.25px) 3.00px 0/15.714px 100% repeat-x,#cc9c30;"></div>
<div style="left:146.5px;top:968.4000000000001px;width:1647.0px;height:27.5px;background:linear-gradient(90deg, rgba(0,0,0,0.42) 0 1.35px, transparent 1.35px) 3.00px 0/15.714px 100% repeat-x,#353535;"></div>
<div style="left:146.5px;top:968.4000000000001px;width:1486.5px;height:27.5px;background:#1b1b1b;"></div>
<div style="left:146.5px;top:968.4000000000001px;width:1486.5px;height:1.5px;background:linear-gradient(90deg, rgba(0,0,0,0.42) 0 1.35px, transparent 1.35px) 3.00px 0/15.714px 100% repeat-x,#2c2e2e;"></div>
<div style="left:146.5px;top:970.9000000000001px;width:1486.5px;height:7.1px;background:linear-gradient(90deg, rgba(0,0,0,0.5) 0 1.25px, transparent 1.25px) 3.00px 0/15.714px 100% repeat-x,#20f82c;"></div>
<div style="left:146.5px;top:979.0000000000001px;width:1486.5px;height:6.700000000000001px;background:linear-gradient(90deg, rgba(0,0,0,0.5) 0 1.25px, transparent 1.25px) 3.00px 0/15.714px 100% repeat-x,#30f6ae;"></div>
<div style="left:146.5px;top:987.0000000000001px;width:1486.5px;height:6.799999999999997px;background:linear-gradient(90deg, rgba(0,0,0,0.5) 0 1.25px, transparent 1.25px) 3.00px 0/15.714px 100% repeat-x,#b8f812;"></div>
<div style="left:146.5px;top:998.8px;width:1647.0px;height:139px;background:linear-gradient(90deg, rgba(0,0,0,0.42) 0 1.35px, transparent 1.35px) 3.00px 0/15.714px 100% repeat-x,#363636;"></div>
<div style="left:146.5px;top:998.8px;width:1486.5px;height:53px;background:linear-gradient(90deg, rgba(0,0,0,0.55) 0 1.35px, transparent 1.35px) 3.00px 0/15.714px 100% repeat-x,repeating-linear-gradient(180deg, rgba(255,255,255,0.05) 0 1px, transparent 1px 5px),#2c2c2c;"></div>
<div style="left:146.5px;top:1140.2px;width:1647.0px;height:27.5px;background:linear-gradient(90deg, rgba(0,0,0,0.42) 0 1.35px, transparent 1.35px) 3.00px 0/15.714px 100% repeat-x,#353535;"></div>
<div style="left:146.5px;top:1140.2px;width:1486.5px;height:27.5px;background:#22f822;"><div class="t" style="left:5.5px;top:5.8px;font-size:15.5px;letter-spacing:0px;color:#0a440a">... VOX CHORUS</div></div>
<svg style="left:1625.0px;top:1140.2px" width="8" height="27.5"><path d="M2 0 L8 0 L8 27.5 Z" fill="rgba(0,0,0,0.13)"/></svg>
<div style="left:146.5px;top:1170.8px;width:1647.0px;height:27.5px;background:linear-gradient(90deg, rgba(0,0,0,0.42) 0 1.35px, transparent 1.35px) 3.00px 0/15.714px 100% repeat-x,#353535;"></div>
<div style="left:146.5px;top:1170.8px;width:1486.5px;height:27.5px;background:#1ae8f8;"><div class="t" style="left:5.5px;top:5.8px;font-size:15.5px;letter-spacing:0px;color:#073a44">... VOX FX</div></div>
<svg style="left:1625.0px;top:1170.8px" width="8" height="27.5"><path d="M2 0 L8 0 L8 27.5 Z" fill="rgba(0,0,0,0.13)"/></svg>
<div style="left:146.5px;top:1201.3999999999999px;width:1647.0px;height:27.5px;background:linear-gradient(90deg, rgba(0,0,0,0.42) 0 1.35px, transparent 1.35px) 3.00px 0/15.714px 100% repeat-x,#353535;"></div>
<div style="left:146.5px;top:1201.3999999999999px;width:1486.5px;height:27.5px;background:#90a0f8;"><div class="t" style="left:5.5px;top:5.8px;font-size:15.5px;letter-spacing:0px;color:#1a2450">... VOX HARMONIES</div></div>
<svg style="left:1625.0px;top:1201.4px" width="8" height="27.5"><path d="M2 0 L8 0 L8 27.5 Z" fill="rgba(0,0,0,0.13)"/></svg>
<div style="left:146.5px;top:1233.7px;width:1647.0px;height:27.3px;background:linear-gradient(90deg, rgba(0,0,0,0.42) 0 1.35px, transparent 1.35px) 3.00px 0/15.714px 100% repeat-x,#353535;"></div>
<div class="t" style="left:1742px;top:1236px;font-size:25px;font-weight:bold;letter-spacing:3px;color:#2c2c2c;">1/1</div>
<div style="left:1633.2px;top:242px;width:1.8px;height:1019px;background:#b4b4b4;"></div>
<svg style="left:991px;top:284px" width="13" height="8"><path d="M0.5 0.5 H12.5 L6.5 7 Z" fill="#3ab4e8"/></svg>
<svg style="left:991px;top:1262px" width="13" height="8"><path d="M0.5 7.5 H12.5 L6.5 1 Z" fill="#3ab4e8"/></svg>
<svg style="left:381.05px;top:1261px" width="6" height="14"><path d="M2.5 0 V12.5 H5.5" stroke="#9a9a9a" stroke-width="1.3" fill="none"/></svg>
<div class="t m" style="left:388.05px;top:1265px;font-size:16px;color:#c4c4c4;">1:00</div>
<svg style="left:630.50px;top:1261px" width="6" height="14"><path d="M2.5 0 V12.5 H5.5" stroke="#9a9a9a" stroke-width="1.3" fill="none"/></svg>
<div class="t m" style="left:637.50px;top:1265px;font-size:16px;color:#c4c4c4;">2:00</div>
<svg style="left:879.95px;top:1261px" width="6" height="14"><path d="M2.5 0 V12.5 H5.5" stroke="#9a9a9a" stroke-width="1.3" fill="none"/></svg>
<div class="t m" style="left:886.95px;top:1265px;font-size:16px;color:#c4c4c4;">3:00</div>
<svg style="left:1129.40px;top:1261px" width="6" height="14"><path d="M2.5 0 V12.5 H5.5" stroke="#9a9a9a" stroke-width="1.3" fill="none"/></svg>
<div class="t m" style="left:1136.40px;top:1265px;font-size:16px;color:#c4c4c4;">4:00</div>
<svg style="left:1378.85px;top:1261px" width="6" height="14"><path d="M2.5 0 V12.5 H5.5" stroke="#9a9a9a" stroke-width="1.3" fill="none"/></svg>
<div class="t m" style="left:1385.85px;top:1265px;font-size:16px;color:#c4c4c4;">5:00</div>
<svg style="left:1628.30px;top:1261px" width="6" height="14"><path d="M2.5 0 V12.5 H5.5" stroke="#9a9a9a" stroke-width="1.3" fill="none"/></svg>
<div class="t m" style="left:1635.30px;top:1265px;font-size:16px;color:#c4c4c4;">6:00</div>
<div style="left:175.57500000000002px;top:1261px;width:1.2px;height:3px;background:#a0a0a0;"></div>
<div style="left:217.15px;top:1261px;width:1.2px;height:3px;background:#a0a0a0;"></div>
<div style="left:258.72499999999997px;top:1261px;width:1.2px;height:3px;background:#a0a0a0;"></div>
<div style="left:300.29999999999995px;top:1261px;width:1.2px;height:3px;background:#a0a0a0;"></div>
<div style="left:341.875px;top:1261px;width:1.2px;height:3px;background:#a0a0a0;"></div>
<div style="left:425.025px;top:1261px;width:1.2px;height:3px;background:#a0a0a0;"></div>
<div style="left:466.6px;top:1261px;width:1.2px;height:3px;background:#a0a0a0;"></div>
<div style="left:508.17499999999995px;top:1261px;width:1.2px;height:3px;background:#a0a0a0;"></div>
<div style="left:549.75px;top:1261px;width:1.2px;height:3px;background:#a0a0a0;"></div>
<div style="left:591.325px;top:1261px;width:1.2px;height:3px;background:#a0a0a0;"></div>
<div style="left:674.475px;top:1261px;width:1.2px;height:3px;background:#a0a0a0;"></div>
<div style="left:716.0500000000001px;top:1261px;width:1.2px;height:3px;background:#a0a0a0;"></div>
<div style="left:757.625px;top:1261px;width:1.2px;height:3px;background:#a0a0a0;"></div>
<div style="left:799.2px;top:1261px;width:1.2px;height:3px;background:#a0a0a0;"></div>
<div style="left:840.7750000000001px;top:1261px;width:1.2px;height:3px;background:#a0a0a0;"></div>
<div style="left:923.9250000000001px;top:1261px;width:1.2px;height:3px;background:#a0a0a0;"></div>
<div style="left:965.5px;top:1261px;width:1.2px;height:3px;background:#a0a0a0;"></div>
<div style="left:1007.075px;top:1261px;width:1.2px;height:3px;background:#a0a0a0;"></div>
<div style="left:1048.65px;top:1261px;width:1.2px;height:3px;background:#a0a0a0;"></div>
<div style="left:1090.2250000000001px;top:1261px;width:1.2px;height:3px;background:#a0a0a0;"></div>
<div style="left:1173.375px;top:1261px;width:1.2px;height:3px;background:#a0a0a0;"></div>
<div style="left:1214.95px;top:1261px;width:1.2px;height:3px;background:#a0a0a0;"></div>
<div style="left:1256.525px;top:1261px;width:1.2px;height:3px;background:#a0a0a0;"></div>
<div style="left:1298.1000000000001px;top:1261px;width:1.2px;height:3px;background:#a0a0a0;"></div>
<div style="left:1339.6750000000002px;top:1261px;width:1.2px;height:3px;background:#a0a0a0;"></div>
<div style="left:1422.825px;top:1261px;width:1.2px;height:3px;background:#a0a0a0;"></div>
<div style="left:1464.4px;top:1261px;width:1.2px;height:3px;background:#a0a0a0;"></div>
<div style="left:1505.9750000000001px;top:1261px;width:1.2px;height:3px;background:#a0a0a0;"></div>
<div style="left:1547.5500000000002px;top:1261px;width:1.2px;height:3px;background:#a0a0a0;"></div>
<div style="left:1589.125px;top:1261px;width:1.2px;height:3px;background:#a0a0a0;"></div>
<div style="left:1672.275px;top:1261px;width:1.2px;height:3px;background:#a0a0a0;"></div>
<div style="left:1713.8500000000001px;top:1261px;width:1.2px;height:3px;background:#a0a0a0;"></div>
<div style="left:1755.4250000000002px;top:1261px;width:1.2px;height:3px;background:#a0a0a0;"></div>
<div style="left:1801px;top:240px;width:45px;height:18px;background:#434343;border-radius:9px;"><div class="t" style="left:0;top:1px;width:45px;text-align:center;font-size:15.5px;color:#dcdcdc;">Set</div></div>
<div style="left:1800.8px;top:264px;width:18px;height:18px;background:#3e3e3e;border-radius:50%;"></div>
<svg style="left:1800.3px;top:263.5px" width="19" height="19"><path d="M12 9.5 H5.5 M9 6 L5.5 9.5 L9 13" stroke="#dcdcdc" stroke-width="2.2" fill="none"/></svg>
<div style="left:1827.8px;top:264px;width:18px;height:18px;background:#3e3e3e;border-radius:50%;"></div>
<svg style="left:1827.3px;top:263.5px" width="19" height="19"><path d="M7 9.5 H13.5 M10 6 L13.5 9.5 L10 13" stroke="#dcdcdc" stroke-width="2.2" fill="none"/></svg>
<div style="left:1867px;top:264px;width:34px;height:18px;background:#434343;"></div>
<svg style="left:1867px;top:264px" width="34" height="18"><circle cx="12.5" cy="12.5" r="2.3" fill="#dcdcdc"/><circle cx="21.5" cy="5.5" r="2.3" fill="#dcdcdc"/><path d="M12.5 12.5 L21.5 5.5" stroke="#dcdcdc" stroke-width="1.8"/></svg>
<div style="left:1910px;top:264px;width:34px;height:18px;background:#434343;"></div>
<svg style="left:1910px;top:264px" width="34" height="18"><path d="M13 8.5 V6.5 Q13 3 17 3 Q21 3 21 6.5 V8.5" stroke="#dcdcdc" stroke-width="1.8" fill="none"/><rect x="11.5" y="8.5" width="11" height="7" fill="#dcdcdc"/></svg>
<div style="left:1796px;top:291.5px;width:556px;height:970px;background:#1c1c1c;"></div>
<div style="left:1796px;top:291.5px;width:247px;height:970px;background:#121212;"></div>
<div style="left:1796px;top:291.6px;width:247px;height:111.4px;background:#fdee33;"></div>
<svg style="left:1800.0px;top:294.6px" width="22" height="22"><circle cx="11" cy="11" r="9.2" stroke="#3a3410" stroke-width="1.7" fill="none"/><path d="M6 7.8 H12.8 M8.4 11.2 H15.6 M8.4 14.4 H15.6" stroke="#3a3410" stroke-width="1.7"/></svg>
<div class="t" style="left:1831.5px;top:298.1px;font-size:15.5px;font-weight:bold;letter-spacing:0.3px;color:#3a3410;">Bass</div>
<div style="left:1796px;top:403.0px;width:7px;height:3px;background:#fdee33;"></div>
<div style="left:2045px;top:291.6px;width:119.59999999999991px;height:111.4px;background:#383838;"></div>
<div style="left:2168px;top:291.6px;width:184px;height:111.4px;background:#383838;"></div>
<div style="left:2337px;top:292.6px;width:5px;height:109.4px;background:#050505;"></div>
<div style="left:2343.5px;top:292.6px;width:5.5px;height:109.4px;background:#050505;"></div>
<div style="left:2337px;top:305.20000000000005px;width:12px;height:1.2px;background:#3a3a3a;"></div>
<div style="left:2049px;top:295.9px;width:112.5px;height:20.1px;background:#1e1e1e;border:1.5px solid #000;"></div><div class="t" style="left:2052px;top:295.9px;width:106.5px;height:20.1px;display:flex;align-items:center;justify-content:flex-start;font-size:16px;color:#dedede;letter-spacing:0.9px;-webkit-text-stroke:0.3px #dedede;">Master</div>
<svg style="left:2145px;top:300.1px" width="14" height="12"><path d="M1 1 H13 L7 10.5 Z" fill="#e0e0e0"/></svg>
<div style="left:2049px;top:322.8px;width:112.5px;height:20.2px;background:#3c3c3c;border:1.5px solid #000;"></div>
<div style="left:2173px;top:295.9px;width:73.6px;height:20.1px;background:#f39a2a;border:1.5px solid #000;"></div><div class="t" style="left:2173px;top:295.9px;width:73.6px;height:20.1px;display:flex;align-items:center;justify-content:center;font-size:16px;color:#111;letter-spacing:0.3px;-webkit-text-stroke:0.3px #111;">1</div>
<div style="left:2254px;top:295.9px;width:33.0px;height:20.1px;background:#3e3e3e;border:1.5px solid #000;"></div><div class="t" style="left:2254px;top:295.9px;width:33.0px;height:20.1px;display:flex;align-items:center;justify-content:center;font-size:16px;color:#dedede;letter-spacing:0.3px;-webkit-text-stroke:0.3px #dedede;">S</div>
<div style="left:2173px;top:322.8px;width:73.6px;height:20.2px;background:linear-gradient(90deg,#167a88 0 61.5px,#222 61.5px);border:1.5px solid #000;"></div><div class="t" style="left:2173px;top:322.8px;width:73.6px;height:20.2px;display:flex;align-items:center;justify-content:center;font-size:16px;color:#dedede;letter-spacing:0.3px;-webkit-text-stroke:0.3px #dedede;">0</div>
<div style="left:2254px;top:322.8px;width:73.0px;height:20.2px;background:#232323;border:1.5px solid #000;"></div><div class="t" style="left:2254px;top:322.8px;width:73.0px;height:20.2px;display:flex;align-items:center;justify-content:center;font-size:16px;color:#dedede;letter-spacing:0.3px;-webkit-text-stroke:0.3px #dedede;">C</div>
<div style="left:1796px;top:403px;width:7px;height:30.6px;background:#fdee33;"></div>
<div style="left:1804.5px;top:406px;width:238.5px;height:27.6px;background:#9a7049;"></div>
<div style="left:1803px;top:403px;width:1.5px;height:30.6px;background:#141414;"></div>
<svg style="left:1808.2px;top:408.8px" width="22" height="22"><circle cx="11" cy="11" r="9.2" stroke="#2e1f0e" stroke-width="1.7" fill="none"/><path d="M8.2 6.5 L15.2 11 L8.2 15.5 Z" fill="#2e1f0e"/></svg>
<div class="t" style="left:1840px;top:412.5px;font-size:15.5px;font-weight:bold;letter-spacing:0.5px;color:#2e1f0e;">Agro</div>
<div style="left:2045px;top:406px;width:119.59999999999991px;height:27.6px;background:#383838;"></div>
<div style="left:2168px;top:406px;width:184px;height:27.6px;background:#383838;"></div>
<div style="left:2337px;top:407px;width:5px;height:25.6px;background:#050505;"></div>
<div style="left:2343.5px;top:407px;width:5.5px;height:25.6px;background:#050505;"></div>
<div style="left:2337px;top:409px;width:12px;height:1.2px;background:#3a3a3a;"></div>
<div style="left:2049px;top:409.7px;width:112.5px;height:20.3px;background:#3c3c3c;border:1.5px solid #000;"></div>
<div style="left:2173px;top:409.7px;width:73.6px;height:20.3px;background:#f39a2a;border:1.5px solid #000;"></div><div class="t" style="left:2173px;top:409.7px;width:73.6px;height:20.3px;display:flex;align-items:center;justify-content:center;font-size:16px;color:#111;letter-spacing:0.3px;-webkit-text-stroke:0.3px #111;">2</div>
<div style="left:2254px;top:409.7px;width:33.0px;height:20.3px;background:#3e3e3e;border:1.5px solid #000;"></div><div class="t" style="left:2254px;top:409.7px;width:33.0px;height:20.3px;display:flex;align-items:center;justify-content:center;font-size:16px;color:#dedede;letter-spacing:0.3px;-webkit-text-stroke:0.3px #dedede;">S</div>
<div style="left:2294px;top:409.7px;width:33.0px;height:20.3px;background:#3e3e3e;border:1.5px solid #000;"></div>
<div style="left:2305.5px;top:414.8px;width:10px;height:10px;background:#8a8a8a;border-radius:50%;"></div>
<div style="left:1796px;top:433.6px;width:7px;height:30.6px;background:#fdee33;"></div>
<div style="left:1804.5px;top:436.6px;width:238.5px;height:27.6px;background:#f9a52a;"></div>
<div style="left:1803px;top:433.6px;width:1.5px;height:30.6px;background:#141414;"></div>
<svg style="left:1808.2px;top:439.4px" width="22" height="22"><circle cx="11" cy="11" r="9.2" stroke="#3a2408" stroke-width="1.7" fill="none"/><path d="M8.2 6.5 L15.2 11 L8.2 15.5 Z" fill="#3a2408"/></svg>
<div class="t" style="left:1840px;top:443.1px;font-size:15.5px;font-weight:bold;letter-spacing:0.5px;color:#3a2408;">Sub</div>
<div style="left:2045px;top:436.6px;width:119.59999999999991px;height:27.6px;background:#383838;"></div>
<div style="left:2168px;top:436.6px;width:184px;height:27.6px;background:#383838;"></div>
<div style="left:2337px;top:437.6px;width:5px;height:25.6px;background:#050505;"></div>
<div style="left:2343.5px;top:437.6px;width:5.5px;height:25.6px;background:#050505;"></div>
<div style="left:2337px;top:439.6px;width:12px;height:1.2px;background:#3a3a3a;"></div>
<div style="left:2049px;top:440.3px;width:112.5px;height:20.3px;background:#3c3c3c;border:1.5px solid #000;"></div>
<div style="left:2173px;top:440.3px;width:73.6px;height:20.3px;background:#f39a2a;border:1.5px solid #000;"></div><div class="t" style="left:2173px;top:440.3px;width:73.6px;height:20.3px;display:flex;align-items:center;justify-content:center;font-size:16px;color:#111;letter-spacing:0.3px;-webkit-text-stroke:0.3px #111;">3</div>
<div style="left:2254px;top:440.3px;width:33.0px;height:20.3px;background:#3e3e3e;border:1.5px solid #000;"></div><div class="t" style="left:2254px;top:440.3px;width:33.0px;height:20.3px;display:flex;align-items:center;justify-content:center;font-size:16px;color:#dedede;letter-spacing:0.3px;-webkit-text-stroke:0.3px #dedede;">S</div>
<div style="left:2294px;top:440.3px;width:33.0px;height:20.3px;background:#3e3e3e;border:1.5px solid #000;"></div>
<div style="left:2305.5px;top:445.40000000000003px;width:10px;height:10px;background:#8a8a8a;border-radius:50%;"></div>
<div style="left:1796px;top:464.2px;width:7px;height:30.6px;background:#fdee33;"></div>
<div style="left:1804.5px;top:467.2px;width:238.5px;height:27.6px;background:#fdee33;"></div>
<div style="left:1803px;top:464.2px;width:1.5px;height:30.6px;background:#141414;"></div>
<svg style="left:1808.2px;top:470.0px" width="22" height="22"><circle cx="11" cy="11" r="9.2" stroke="#3a3410" stroke-width="1.7" fill="none"/><path d="M6.8 7.6 H14.6 M7.6 11 H15.2 M7.6 14.4 H15.2" stroke="#3a3410" stroke-width="1.7"/></svg>
<div class="t" style="left:1840px;top:473.7px;font-size:15.5px;font-weight:bold;letter-spacing:0.5px;color:#3a3410;">Ad Thump</div>
<div style="left:2045px;top:467.2px;width:119.59999999999991px;height:27.6px;background:#383838;"></div>
<div style="left:2168px;top:467.2px;width:184px;height:27.6px;background:#383838;"></div>
<div style="left:2337px;top:468.2px;width:5px;height:25.6px;background:#050505;"></div>
<div style="left:2343.5px;top:468.2px;width:5.5px;height:25.6px;background:#050505;"></div>
<div style="left:2337px;top:470.2px;width:12px;height:1.2px;background:#3a3a3a;"></div>
<div style="left:2049px;top:470.9px;width:112.5px;height:20.3px;background:#3c3c3c;border:1.5px solid #000;"></div>
<div style="left:2173px;top:470.9px;width:73.6px;height:20.3px;background:#f39a2a;border:1.5px solid #000;"></div><div class="t" style="left:2173px;top:470.9px;width:73.6px;height:20.3px;display:flex;align-items:center;justify-content:center;font-size:16px;color:#111;letter-spacing:0.3px;-webkit-text-stroke:0.3px #111;">4</div>
<div style="left:2254px;top:470.9px;width:33.0px;height:20.3px;background:#3e3e3e;border:1.5px solid #000;"></div><div class="t" style="left:2254px;top:470.9px;width:33.0px;height:20.3px;display:flex;align-items:center;justify-content:center;font-size:16px;color:#dedede;letter-spacing:0.3px;-webkit-text-stroke:0.3px #dedede;">S</div>
<div style="left:1796px;top:497.5px;width:247px;height:139px;background:#16c0b0;"></div>
<svg style="left:1800.0px;top:500.5px" width="22" height="22"><circle cx="11" cy="11" r="9.2" stroke="#073a36" stroke-width="1.7" fill="none"/><path d="M6 7.8 H12.8 M8.4 11.2 H15.6 M8.4 14.4 H15.6" stroke="#073a36" stroke-width="1.7"/></svg>
<div class="t" style="left:1831.5px;top:504.0px;font-size:15.5px;font-weight:bold;letter-spacing:0.3px;color:#073a36;">Drums</div>
<div style="left:1796px;top:636.5px;width:7px;height:3px;background:#16c0b0;"></div>
<div style="left:2045px;top:497.5px;width:119.59999999999991px;height:139px;background:#383838;"></div>
<div style="left:2168px;top:497.5px;width:184px;height:139px;background:#383838;"></div>
<div style="left:2337px;top:498.5px;width:5px;height:137px;background:#050505;"></div>
<div style="left:2343.5px;top:498.5px;width:5.5px;height:137px;background:#050505;"></div>
<div style="left:2337px;top:511.1px;width:12px;height:1.2px;background:#3a3a3a;"></div>
<div style="left:2049px;top:501.8px;width:112.5px;height:20.1px;background:#1e1e1e;border:1.5px solid #000;"></div><div class="t" style="left:2052px;top:501.8px;width:106.5px;height:20.1px;display:flex;align-items:center;justify-content:flex-start;font-size:16px;color:#dedede;letter-spacing:0.9px;-webkit-text-stroke:0.3px #dedede;">Master</div>
<svg style="left:2145px;top:506.0px" width="14" height="12"><path d="M1 1 H13 L7 10.5 Z" fill="#e0e0e0"/></svg>
<div style="left:2049px;top:528.7px;width:112.5px;height:20.2px;background:#3c3c3c;border:1.5px solid #000;"></div>
<div style="left:2173px;top:501.8px;width:73.6px;height:20.1px;background:#f39a2a;border:1.5px solid #000;"></div><div class="t" style="left:2173px;top:501.8px;width:73.6px;height:20.1px;display:flex;align-items:center;justify-content:center;font-size:16px;color:#111;letter-spacing:0.3px;-webkit-text-stroke:0.3px #111;">7</div>
<div style="left:2254px;top:501.8px;width:33.0px;height:20.1px;background:#3e3e3e;border:1.5px solid #000;"></div><div class="t" style="left:2254px;top:501.8px;width:33.0px;height:20.1px;display:flex;align-items:center;justify-content:center;font-size:16px;color:#dedede;letter-spacing:0.3px;-webkit-text-stroke:0.3px #dedede;">S</div>
<div style="left:2173px;top:528.7px;width:73.6px;height:20.2px;background:linear-gradient(90deg,#167a88 0 61.5px,#222 61.5px);border:1.5px solid #000;"></div><div class="t" style="left:2173px;top:528.7px;width:73.6px;height:20.2px;display:flex;align-items:center;justify-content:center;font-size:16px;color:#dedede;letter-spacing:0.3px;-webkit-text-stroke:0.3px #dedede;">0</div>
<div style="left:2254px;top:528.7px;width:73.0px;height:20.2px;background:#232323;border:1.5px solid #000;"></div><div class="t" style="left:2254px;top:528.7px;width:73.0px;height:20.2px;display:flex;align-items:center;justify-content:center;font-size:16px;color:#dedede;letter-spacing:0.3px;-webkit-text-stroke:0.3px #dedede;">C</div>
<div style="left:1796px;top:636.2px;width:7px;height:30.6px;background:#16c0b0;"></div>
<div style="left:1804.5px;top:639.2px;width:238.5px;height:27.6px;background:#90a0f8;"></div>
<div style="left:1803px;top:636.2px;width:1.5px;height:30.6px;background:#141414;"></div>
<svg style="left:1808.2px;top:642.0px" width="22" height="22"><circle cx="11" cy="11" r="9.2" stroke="#1a2450" stroke-width="1.7" fill="none"/><path d="M6.8 7.6 H14.6 M7.6 11 H15.2 M7.6 14.4 H15.2" stroke="#1a2450" stroke-width="1.7"/></svg>
<div class="t" style="left:1840px;top:645.7px;font-size:15.5px;font-weight:bold;letter-spacing:0.5px;color:#1a2450;">Hats</div>
<div style="left:2045px;top:639.2px;width:119.59999999999991px;height:27.6px;background:#383838;"></div>
<div style="left:2168px;top:639.2px;width:184px;height:27.6px;background:#383838;"></div>
<div style="left:2337px;top:640.2px;width:5px;height:25.6px;background:#050505;"></div>
<div style="left:2343.5px;top:640.2px;width:5.5px;height:25.6px;background:#050505;"></div>
<div style="left:2337px;top:642.2px;width:12px;height:1.2px;background:#3a3a3a;"></div>
<div style="left:2049px;top:642.9px;width:112.5px;height:20.3px;background:#3c3c3c;border:1.5px solid #000;"></div>
<div style="left:2173px;top:642.9px;width:73.6px;height:20.3px;background:#f39a2a;border:1.5px solid #000;"></div><div class="t" style="left:2173px;top:642.9px;width:73.6px;height:20.3px;display:flex;align-items:center;justify-content:center;font-size:16px;color:#111;letter-spacing:0.3px;-webkit-text-stroke:0.3px #111;">8</div>
<div style="left:2254px;top:642.9px;width:33.0px;height:20.3px;background:#3e3e3e;border:1.5px solid #000;"></div><div class="t" style="left:2254px;top:642.9px;width:33.0px;height:20.3px;display:flex;align-items:center;justify-content:center;font-size:16px;color:#dedede;letter-spacing:0.3px;-webkit-text-stroke:0.3px #dedede;">S</div>
<div style="left:1796px;top:666.8px;width:7px;height:30.6px;background:#16c0b0;"></div>
<div style="left:1804.5px;top:669.8px;width:238.5px;height:27.6px;background:#88f86a;"></div>
<div style="left:1803px;top:666.8px;width:1.5px;height:30.6px;background:#141414;"></div>
<svg style="left:1808.2px;top:672.6px" width="22" height="22"><circle cx="11" cy="11" r="9.2" stroke="#0e3a08" stroke-width="1.7" fill="none"/><path d="M8.2 6.5 L15.2 11 L8.2 15.5 Z" fill="#0e3a08"/></svg>
<div class="t" style="left:1840px;top:676.3px;font-size:15.5px;font-weight:bold;letter-spacing:0.5px;color:#0e3a08;">Kick</div>
<div style="left:2045px;top:669.8px;width:119.59999999999991px;height:27.6px;background:#383838;"></div>
<div style="left:2168px;top:669.8px;width:184px;height:27.6px;background:#383838;"></div>
<div style="left:2337px;top:670.8px;width:5px;height:25.6px;background:#050505;"></div>
<div style="left:2343.5px;top:670.8px;width:5.5px;height:25.6px;background:#050505;"></div>
<div style="left:2337px;top:672.8px;width:12px;height:1.2px;background:#3a3a3a;"></div>
<div style="left:2049px;top:673.5px;width:112.5px;height:20.3px;background:#3c3c3c;border:1.5px solid #000;"></div>
<div style="left:2173px;top:673.5px;width:73.6px;height:20.3px;background:#f39a2a;border:1.5px solid #000;"></div><div class="t" style="left:2173px;top:673.5px;width:73.6px;height:20.3px;display:flex;align-items:center;justify-content:center;font-size:16px;color:#111;letter-spacing:0.3px;-webkit-text-stroke:0.3px #111;">11</div>
<div style="left:2254px;top:673.5px;width:33.0px;height:20.3px;background:#3e3e3e;border:1.5px solid #000;"></div><div class="t" style="left:2254px;top:673.5px;width:33.0px;height:20.3px;display:flex;align-items:center;justify-content:center;font-size:16px;color:#dedede;letter-spacing:0.3px;-webkit-text-stroke:0.3px #dedede;">S</div>
<div style="left:1796px;top:697.4px;width:7px;height:30.6px;background:#16c0b0;"></div>
<div style="left:1804.5px;top:700.4px;width:238.5px;height:27.6px;background:#16c0b0;"></div>
<div style="left:1803px;top:697.4px;width:1.5px;height:30.6px;background:#141414;"></div>
<svg style="left:1808.2px;top:703.2px" width="22" height="22"><circle cx="11" cy="11" r="9.2" stroke="#073a36" stroke-width="1.7" fill="none"/><path d="M6.8 7.6 H14.6 M7.6 11 H15.2 M7.6 14.4 H15.2" stroke="#073a36" stroke-width="1.7"/></svg>
<div class="t" style="left:1840px;top:706.9px;font-size:15.5px;font-weight:bold;letter-spacing:0.5px;color:#073a36;">Perc</div>
<div style="left:2045px;top:700.4px;width:119.59999999999991px;height:27.6px;background:#383838;"></div>
<div style="left:2168px;top:700.4px;width:184px;height:27.6px;background:#383838;"></div>
<div style="left:2337px;top:701.4px;width:5px;height:25.6px;background:#050505;"></div>
<div style="left:2343.5px;top:701.4px;width:5.5px;height:25.6px;background:#050505;"></div>
<div style="left:2337px;top:703.4px;width:12px;height:1.2px;background:#3a3a3a;"></div>
<div style="left:2049px;top:704.1px;width:112.5px;height:20.3px;background:#3c3c3c;border:1.5px solid #000;"></div>
<div style="left:2173px;top:704.1px;width:73.6px;height:20.3px;background:#f39a2a;border:1.5px solid #000;"></div><div class="t" style="left:2173px;top:704.1px;width:73.6px;height:20.3px;display:flex;align-items:center;justify-content:center;font-size:16px;color:#111;letter-spacing:0.3px;-webkit-text-stroke:0.3px #111;">12</div>
<div style="left:2254px;top:704.1px;width:33.0px;height:20.3px;background:#3e3e3e;border:1.5px solid #000;"></div><div class="t" style="left:2254px;top:704.1px;width:33.0px;height:20.3px;display:flex;align-items:center;justify-content:center;font-size:16px;color:#dedede;letter-spacing:0.3px;-webkit-text-stroke:0.3px #dedede;">S</div>
<div style="left:1796px;top:728.0px;width:7px;height:30.6px;background:#16c0b0;"></div>
<div style="left:1804.5px;top:731.0px;width:238.5px;height:27.6px;background:#fdee33;"></div>
<div style="left:1803px;top:728.0px;width:1.5px;height:30.6px;background:#141414;"></div>
<svg style="left:1808.2px;top:733.8px" width="22" height="22"><circle cx="11" cy="11" r="9.2" stroke="#3a3410" stroke-width="1.7" fill="none"/><path d="M6.8 7.6 H14.6 M7.6 11 H15.2 M7.6 14.4 H15.2" stroke="#3a3410" stroke-width="1.7"/></svg>
<div class="t" style="left:1840px;top:737.5px;font-size:15.5px;font-weight:bold;letter-spacing:0.5px;color:#3a3410;">Ride-Shake</div>
<div style="left:2045px;top:731.0px;width:119.59999999999991px;height:27.6px;background:#383838;"></div>
<div style="left:2168px;top:731.0px;width:184px;height:27.6px;background:#383838;"></div>
<div style="left:2337px;top:732.0px;width:5px;height:25.6px;background:#050505;"></div>
<div style="left:2343.5px;top:732.0px;width:5.5px;height:25.6px;background:#050505;"></div>
<div style="left:2337px;top:734.0px;width:12px;height:1.2px;background:#3a3a3a;"></div>
<div style="left:2049px;top:734.7px;width:112.5px;height:20.3px;background:#3c3c3c;border:1.5px solid #000;"></div>
<div style="left:2173px;top:734.7px;width:73.6px;height:20.3px;background:#f39a2a;border:1.5px solid #000;"></div><div class="t" style="left:2173px;top:734.7px;width:73.6px;height:20.3px;display:flex;align-items:center;justify-content:center;font-size:16px;color:#111;letter-spacing:0.3px;-webkit-text-stroke:0.3px #111;">16</div>
<div style="left:2254px;top:734.7px;width:33.0px;height:20.3px;background:#3e3e3e;border:1.5px solid #000;"></div><div class="t" style="left:2254px;top:734.7px;width:33.0px;height:20.3px;display:flex;align-items:center;justify-content:center;font-size:16px;color:#dedede;letter-spacing:0.3px;-webkit-text-stroke:0.3px #dedede;">S</div>
<div style="left:1796px;top:758.6px;width:7px;height:30.6px;background:#16c0b0;"></div>
<div style="left:1804.5px;top:761.6px;width:238.5px;height:27.6px;background:#f9a52a;"></div>
<div style="left:1803px;top:758.6px;width:1.5px;height:30.6px;background:#141414;"></div>
<svg style="left:1808.2px;top:764.4px" width="22" height="22"><circle cx="11" cy="11" r="9.2" stroke="#3a2408" stroke-width="1.7" fill="none"/><path d="M8.2 6.5 L15.2 11 L8.2 15.5 Z" fill="#3a2408"/></svg>
<div class="t" style="left:1840px;top:768.1px;font-size:15.5px;font-weight:bold;letter-spacing:0.5px;color:#3a2408;">Snare</div>
<div style="left:2045px;top:761.6px;width:119.59999999999991px;height:27.6px;background:#383838;"></div>
<div style="left:2168px;top:761.6px;width:184px;height:27.6px;background:#383838;"></div>
<div style="left:2337px;top:762.6px;width:5px;height:25.6px;background:#050505;"></div>
<div style="left:2343.5px;top:762.6px;width:5.5px;height:25.6px;background:#050505;"></div>
<div style="left:2337px;top:764.6px;width:12px;height:1.2px;background:#3a3a3a;"></div>
<div style="left:2049px;top:765.3px;width:112.5px;height:20.3px;background:#3c3c3c;border:1.5px solid #000;"></div>
<div style="left:2173px;top:765.3px;width:73.6px;height:20.3px;background:#f39a2a;border:1.5px solid #000;"></div><div class="t" style="left:2173px;top:765.3px;width:73.6px;height:20.3px;display:flex;align-items:center;justify-content:center;font-size:16px;color:#111;letter-spacing:0.3px;-webkit-text-stroke:0.3px #111;">19</div>
<div style="left:2254px;top:765.3px;width:33.0px;height:20.3px;background:#3e3e3e;border:1.5px solid #000;"></div><div class="t" style="left:2254px;top:765.3px;width:33.0px;height:20.3px;display:flex;align-items:center;justify-content:center;font-size:16px;color:#dedede;letter-spacing:0.3px;-webkit-text-stroke:0.3px #dedede;">S</div>
<div style="left:1796px;top:792.2px;width:247px;height:112px;background:#c0f018;"></div>
<svg style="left:1800.0px;top:795.2px" width="22" height="22"><circle cx="11" cy="11" r="9.2" stroke="#2e3a08" stroke-width="1.7" fill="none"/><path d="M6 7.8 H12.8 M8.4 11.2 H15.6 M8.4 14.4 H15.6" stroke="#2e3a08" stroke-width="1.7"/></svg>
<div class="t" style="left:1831.5px;top:798.7px;font-size:15.5px;font-weight:bold;letter-spacing:0.3px;color:#2e3a08;">Music</div>
<div style="left:1796px;top:904.2px;width:7px;height:3px;background:#c0f018;"></div>
<div style="left:2045px;top:792.2px;width:119.59999999999991px;height:112px;background:#383838;"></div>
<div style="left:2168px;top:792.2px;width:184px;height:112px;background:#383838;"></div>
<div style="left:2337px;top:793.2px;width:5px;height:110px;background:#050505;"></div>
<div style="left:2343.5px;top:793.2px;width:5.5px;height:110px;background:#050505;"></div>
<div style="left:2337px;top:805.8000000000001px;width:12px;height:1.2px;background:#3a3a3a;"></div>
<div style="left:2049px;top:796.5px;width:112.5px;height:20.1px;background:#1e1e1e;border:1.5px solid #000;"></div><div class="t" style="left:2052px;top:796.5px;width:106.5px;height:20.1px;display:flex;align-items:center;justify-content:flex-start;font-size:16px;color:#dedede;letter-spacing:0.9px;-webkit-text-stroke:0.3px #dedede;">Master</div>
<svg style="left:2145px;top:800.7px" width="14" height="12"><path d="M1 1 H13 L7 10.5 Z" fill="#e0e0e0"/></svg>
<div style="left:2049px;top:823.4px;width:112.5px;height:20.2px;background:#3c3c3c;border:1.5px solid #000;"></div>
<div style="left:2173px;top:796.5px;width:73.6px;height:20.1px;background:#f39a2a;border:1.5px solid #000;"></div><div class="t" style="left:2173px;top:796.5px;width:73.6px;height:20.1px;display:flex;align-items:center;justify-content:center;font-size:16px;color:#111;letter-spacing:0.3px;-webkit-text-stroke:0.3px #111;">20</div>
<div style="left:2254px;top:796.5px;width:33.0px;height:20.1px;background:#3e3e3e;border:1.5px solid #000;"></div><div class="t" style="left:2254px;top:796.5px;width:33.0px;height:20.1px;display:flex;align-items:center;justify-content:center;font-size:16px;color:#dedede;letter-spacing:0.3px;-webkit-text-stroke:0.3px #dedede;">S</div>
<div style="left:2173px;top:823.4px;width:73.6px;height:20.2px;background:linear-gradient(90deg,#167a88 0 61.5px,#222 61.5px);border:1.5px solid #000;"></div><div class="t" style="left:2173px;top:823.4px;width:73.6px;height:20.2px;display:flex;align-items:center;justify-content:center;font-size:16px;color:#dedede;letter-spacing:0.3px;-webkit-text-stroke:0.3px #dedede;">0</div>
<div style="left:2254px;top:823.4px;width:73.0px;height:20.2px;background:#232323;border:1.5px solid #000;"></div><div class="t" style="left:2254px;top:823.4px;width:73.0px;height:20.2px;display:flex;align-items:center;justify-content:center;font-size:16px;color:#dedede;letter-spacing:0.3px;-webkit-text-stroke:0.3px #dedede;">C</div>
<div style="left:1796px;top:904.2px;width:7px;height:30.6px;background:#c0f018;"></div>
<div style="left:1804.5px;top:907.2px;width:238.5px;height:27.6px;background:#1ae8f8;"></div>
<div style="left:1803px;top:904.2px;width:1.5px;height:30.6px;background:#141414;"></div>
<svg style="left:1808.2px;top:910.0px" width="22" height="22"><circle cx="11" cy="11" r="9.2" stroke="#073a44" stroke-width="1.7" fill="none"/><path d="M8.2 6.5 L15.2 11 L8.2 15.5 Z" fill="#073a44"/></svg>
<div class="t" style="left:1840px;top:913.7px;font-size:15.5px;font-weight:bold;letter-spacing:0.5px;color:#073a44;">FX</div>
<div style="left:2045px;top:907.2px;width:119.59999999999991px;height:27.6px;background:#383838;"></div>
<div style="left:2168px;top:907.2px;width:184px;height:27.6px;background:#383838;"></div>
<div style="left:2337px;top:908.2px;width:5px;height:25.6px;background:#050505;"></div>
<div style="left:2343.5px;top:908.2px;width:5.5px;height:25.6px;background:#050505;"></div>
<div style="left:2337px;top:910.2px;width:12px;height:1.2px;background:#3a3a3a;"></div>
<div style="left:2049px;top:910.9px;width:112.5px;height:20.3px;background:#3c3c3c;border:1.5px solid #000;"></div>
<div style="left:2173px;top:910.9px;width:73.6px;height:20.3px;background:#f39a2a;border:1.5px solid #000;"></div><div class="t" style="left:2173px;top:910.9px;width:73.6px;height:20.3px;display:flex;align-items:center;justify-content:center;font-size:16px;color:#111;letter-spacing:0.3px;-webkit-text-stroke:0.3px #111;">21</div>
<div style="left:2254px;top:910.9px;width:33.0px;height:20.3px;background:#3e3e3e;border:1.5px solid #000;"></div><div class="t" style="left:2254px;top:910.9px;width:33.0px;height:20.3px;display:flex;align-items:center;justify-content:center;font-size:16px;color:#dedede;letter-spacing:0.3px;-webkit-text-stroke:0.3px #dedede;">S</div>
<div style="left:1796px;top:934.8px;width:7px;height:30.6px;background:#c0f018;"></div>
<div style="left:1804.5px;top:937.8px;width:238.5px;height:27.6px;background:#1888d0;"></div>
<div style="left:1803px;top:934.8px;width:1.5px;height:30.6px;background:#141414;"></div>
<svg style="left:1808.2px;top:940.6px" width="22" height="22"><circle cx="11" cy="11" r="9.2" stroke="#082a48" stroke-width="1.7" fill="none"/><path d="M6.8 7.6 H14.6 M7.6 11 H15.2 M7.6 14.4 H15.2" stroke="#082a48" stroke-width="1.7"/></svg>
<div class="t" style="left:1840px;top:944.3px;font-size:15.5px;font-weight:bold;letter-spacing:0.5px;color:#082a48;">Keys</div>
<div style="left:2045px;top:937.8px;width:119.59999999999991px;height:27.6px;background:#383838;"></div>
<div style="left:2168px;top:937.8px;width:184px;height:27.6px;background:#383838;"></div>
<div style="left:2337px;top:938.8px;width:5px;height:25.6px;background:#050505;"></div>
<div style="left:2343.5px;top:938.8px;width:5.5px;height:25.6px;background:#050505;"></div>
<div style="left:2337px;top:940.8px;width:12px;height:1.2px;background:#3a3a3a;"></div>
<div style="left:2049px;top:941.5px;width:112.5px;height:20.3px;background:#3c3c3c;border:1.5px solid #000;"></div>
<div style="left:2173px;top:941.5px;width:73.6px;height:20.3px;background:#f39a2a;border:1.5px solid #000;"></div><div class="t" style="left:2173px;top:941.5px;width:73.6px;height:20.3px;display:flex;align-items:center;justify-content:center;font-size:16px;color:#111;letter-spacing:0.3px;-webkit-text-stroke:0.3px #111;">22</div>
<div style="left:2254px;top:941.5px;width:33.0px;height:20.3px;background:#3e3e3e;border:1.5px solid #000;"></div><div class="t" style="left:2254px;top:941.5px;width:33.0px;height:20.3px;display:flex;align-items:center;justify-content:center;font-size:16px;color:#dedede;letter-spacing:0.3px;-webkit-text-stroke:0.3px #dedede;">S</div>
<div style="left:1796px;top:965.4px;width:7px;height:30.6px;background:#c0f018;"></div>
<div style="left:1804.5px;top:968.4px;width:238.5px;height:27.6px;background:#2cf0a0;"></div>
<div style="left:1803px;top:965.4px;width:1.5px;height:30.6px;background:#141414;"></div>
<svg style="left:1808.2px;top:971.2px" width="22" height="22"><circle cx="11" cy="11" r="9.2" stroke="#063a26" stroke-width="1.7" fill="none"/><path d="M6.8 7.6 H14.6 M7.6 11 H15.2 M7.6 14.4 H15.2" stroke="#063a26" stroke-width="1.7"/></svg>
<div class="t" style="left:1840px;top:974.9px;font-size:15.5px;font-weight:bold;letter-spacing:0.5px;color:#063a26;">Pads-Drones-Strings</div>
<div style="left:2045px;top:968.4px;width:119.59999999999991px;height:27.6px;background:#383838;"></div>
<div style="left:2168px;top:968.4px;width:184px;height:27.6px;background:#383838;"></div>
<div style="left:2337px;top:969.4px;width:5px;height:25.6px;background:#050505;"></div>
<div style="left:2343.5px;top:969.4px;width:5.5px;height:25.6px;background:#050505;"></div>
<div style="left:2337px;top:971.4px;width:12px;height:1.2px;background:#3a3a3a;"></div>
<div style="left:2049px;top:972.1px;width:112.5px;height:20.3px;background:#3c3c3c;border:1.5px solid #000;"></div>
<div style="left:2173px;top:972.1px;width:73.6px;height:20.3px;background:#f39a2a;border:1.5px solid #000;"></div><div class="t" style="left:2173px;top:972.1px;width:73.6px;height:20.3px;display:flex;align-items:center;justify-content:center;font-size:16px;color:#111;letter-spacing:0.3px;-webkit-text-stroke:0.3px #111;">27</div>
<div style="left:2254px;top:972.1px;width:33.0px;height:20.3px;background:#3e3e3e;border:1.5px solid #000;"></div><div class="t" style="left:2254px;top:972.1px;width:33.0px;height:20.3px;display:flex;align-items:center;justify-content:center;font-size:16px;color:#dedede;letter-spacing:0.3px;-webkit-text-stroke:0.3px #dedede;">S</div>
<div style="left:1796px;top:998.8px;width:247px;height:139px;background:#22f822;"></div>
<svg style="left:1800.0px;top:1001.8px" width="22" height="22"><circle cx="11" cy="11" r="9.2" stroke="#0a440a" stroke-width="1.7" fill="none"/><path d="M6 7.8 H12.8 M8.4 11.2 H15.6 M8.4 14.4 H15.6" stroke="#0a440a" stroke-width="1.7"/></svg>
<div class="t" style="left:1831.5px;top:1005.3px;font-size:15.5px;font-weight:bold;letter-spacing:0.3px;color:#0a440a;">Vox</div>
<div style="left:1796px;top:1137.8px;width:7px;height:3px;background:#22f822;"></div>
<div style="left:2045px;top:998.8px;width:119.59999999999991px;height:139px;background:#383838;"></div>
<div style="left:2168px;top:998.8px;width:184px;height:139px;background:#383838;"></div>
<div style="left:2337px;top:999.8px;width:5px;height:137px;background:#050505;"></div>
<div style="left:2343.5px;top:999.8px;width:5.5px;height:137px;background:#050505;"></div>
<div style="left:2337px;top:1012.4px;width:12px;height:1.2px;background:#3a3a3a;"></div>
<div style="left:2049px;top:1003.1px;width:112.5px;height:20.1px;background:#1e1e1e;border:1.5px solid #000;"></div><div class="t" style="left:2052px;top:1003.1px;width:106.5px;height:20.1px;display:flex;align-items:center;justify-content:flex-start;font-size:16px;color:#dedede;letter-spacing:0.9px;-webkit-text-stroke:0.3px #dedede;">Master</div>
<svg style="left:2145px;top:1007.3px" width="14" height="12"><path d="M1 1 H13 L7 10.5 Z" fill="#e0e0e0"/></svg>
<div style="left:2049px;top:1030.0px;width:112.5px;height:20.2px;background:#3c3c3c;border:1.5px solid #000;"></div>
<div style="left:2173px;top:1003.1px;width:73.6px;height:20.1px;background:#f39a2a;border:1.5px solid #000;"></div><div class="t" style="left:2173px;top:1003.1px;width:73.6px;height:20.1px;display:flex;align-items:center;justify-content:center;font-size:16px;color:#111;letter-spacing:0.3px;-webkit-text-stroke:0.3px #111;">31</div>
<div style="left:2254px;top:1003.1px;width:33.0px;height:20.1px;background:#3e3e3e;border:1.5px solid #000;"></div><div class="t" style="left:2254px;top:1003.1px;width:33.0px;height:20.1px;display:flex;align-items:center;justify-content:center;font-size:16px;color:#dedede;letter-spacing:0.3px;-webkit-text-stroke:0.3px #dedede;">S</div>
<div style="left:2173px;top:1030.0px;width:73.6px;height:20.2px;background:linear-gradient(90deg,#167a88 0 61.5px,#222 61.5px);border:1.5px solid #000;"></div><div class="t" style="left:2173px;top:1030.0px;width:73.6px;height:20.2px;display:flex;align-items:center;justify-content:center;font-size:16px;color:#dedede;letter-spacing:0.3px;-webkit-text-stroke:0.3px #dedede;">0</div>
<div style="left:2254px;top:1030.0px;width:73.0px;height:20.2px;background:#232323;border:1.5px solid #000;"></div><div class="t" style="left:2254px;top:1030.0px;width:73.0px;height:20.2px;display:flex;align-items:center;justify-content:center;font-size:16px;color:#dedede;letter-spacing:0.3px;-webkit-text-stroke:0.3px #dedede;">C</div>
<div style="left:1796px;top:1137.2px;width:7px;height:30.6px;background:#22f822;"></div>
<div style="left:1804.5px;top:1140.2px;width:238.5px;height:27.6px;background:#22f822;"></div>
<div style="left:1803px;top:1137.2px;width:1.5px;height:30.6px;background:#141414;"></div>
<svg style="left:1808.2px;top:1143.0px" width="22" height="22"><circle cx="11" cy="11" r="9.2" stroke="#0a440a" stroke-width="1.7" fill="none"/><path d="M8.2 6.5 L15.2 11 L8.2 15.5 Z" fill="#0a440a"/></svg>
<div class="t" style="left:1840px;top:1146.7px;font-size:15.5px;font-weight:bold;letter-spacing:0.5px;color:#0a440a;">Chorus</div>
<div style="left:2045px;top:1140.2px;width:119.59999999999991px;height:27.6px;background:#383838;"></div>
<div style="left:2168px;top:1140.2px;width:184px;height:27.6px;background:#383838;"></div>
<div style="left:2337px;top:1141.2px;width:5px;height:25.6px;background:#050505;"></div>
<div style="left:2343.5px;top:1141.2px;width:5.5px;height:25.6px;background:#050505;"></div>
<div style="left:2337px;top:1143.2px;width:12px;height:1.2px;background:#3a3a3a;"></div>
<div style="left:2049px;top:1143.9px;width:112.5px;height:20.3px;background:#3c3c3c;border:1.5px solid #000;"></div>
<div style="left:2173px;top:1143.9px;width:73.6px;height:20.3px;background:#f39a2a;border:1.5px solid #000;"></div><div class="t" style="left:2173px;top:1143.9px;width:73.6px;height:20.3px;display:flex;align-items:center;justify-content:center;font-size:16px;color:#111;letter-spacing:0.3px;-webkit-text-stroke:0.3px #111;">32</div>
<div style="left:2254px;top:1143.9px;width:33.0px;height:20.3px;background:#3e3e3e;border:1.5px solid #000;"></div><div class="t" style="left:2254px;top:1143.9px;width:33.0px;height:20.3px;display:flex;align-items:center;justify-content:center;font-size:16px;color:#dedede;letter-spacing:0.3px;-webkit-text-stroke:0.3px #dedede;">S</div>
<div style="left:1796px;top:1167.8px;width:7px;height:30.6px;background:#22f822;"></div>
<div style="left:1804.5px;top:1170.8px;width:238.5px;height:27.6px;background:#1ae8f8;"></div>
<div style="left:1803px;top:1167.8px;width:1.5px;height:30.6px;background:#141414;"></div>
<svg style="left:1808.2px;top:1173.6px" width="22" height="22"><circle cx="11" cy="11" r="9.2" stroke="#073a44" stroke-width="1.7" fill="none"/><path d="M8.2 6.5 L15.2 11 L8.2 15.5 Z" fill="#073a44"/></svg>
<div class="t" style="left:1840px;top:1177.3px;font-size:15.5px;font-weight:bold;letter-spacing:0.5px;color:#073a44;">FX</div>
<div style="left:2045px;top:1170.8px;width:119.59999999999991px;height:27.6px;background:#383838;"></div>
<div style="left:2168px;top:1170.8px;width:184px;height:27.6px;background:#383838;"></div>
<div style="left:2337px;top:1171.8px;width:5px;height:25.6px;background:#050505;"></div>
<div style="left:2343.5px;top:1171.8px;width:5.5px;height:25.6px;background:#050505;"></div>
<div style="left:2337px;top:1173.8px;width:12px;height:1.2px;background:#3a3a3a;"></div>
<div style="left:2049px;top:1174.5px;width:112.5px;height:20.3px;background:#3c3c3c;border:1.5px solid #000;"></div>
<div style="left:2173px;top:1174.5px;width:73.6px;height:20.3px;background:#f39a2a;border:1.5px solid #000;"></div><div class="t" style="left:2173px;top:1174.5px;width:73.6px;height:20.3px;display:flex;align-items:center;justify-content:center;font-size:16px;color:#111;letter-spacing:0.3px;-webkit-text-stroke:0.3px #111;">33</div>
<div style="left:2254px;top:1174.5px;width:33.0px;height:20.3px;background:#3e3e3e;border:1.5px solid #000;"></div><div class="t" style="left:2254px;top:1174.5px;width:33.0px;height:20.3px;display:flex;align-items:center;justify-content:center;font-size:16px;color:#dedede;letter-spacing:0.3px;-webkit-text-stroke:0.3px #dedede;">S</div>
<div style="left:1796px;top:1198.4px;width:7px;height:30.6px;background:#22f822;"></div>
<div style="left:1804.5px;top:1201.4px;width:238.5px;height:27.6px;background:#90a0f8;"></div>
<div style="left:1803px;top:1198.4px;width:1.5px;height:30.6px;background:#141414;"></div>
<svg style="left:1808.2px;top:1204.2px" width="22" height="22"><circle cx="11" cy="11" r="9.2" stroke="#1a2450" stroke-width="1.7" fill="none"/><path d="M8.2 6.5 L15.2 11 L8.2 15.5 Z" fill="#1a2450"/></svg>
<div class="t" style="left:1840px;top:1207.9px;font-size:15.5px;font-weight:bold;letter-spacing:0.5px;color:#1a2450;">Harms</div>
<div style="left:2045px;top:1201.4px;width:119.59999999999991px;height:27.6px;background:#383838;"></div>
<div style="left:2168px;top:1201.4px;width:184px;height:27.6px;background:#383838;"></div>
<div style="left:2337px;top:1202.4px;width:5px;height:25.6px;background:#050505;"></div>
<div style="left:2343.5px;top:1202.4px;width:5.5px;height:25.6px;background:#050505;"></div>
<div style="left:2337px;top:1204.4px;width:12px;height:1.2px;background:#3a3a3a;"></div>
<div style="left:2049px;top:1205.1px;width:112.5px;height:20.3px;background:#3c3c3c;border:1.5px solid #000;"></div>
<div style="left:2173px;top:1205.1px;width:73.6px;height:20.3px;background:#f39a2a;border:1.5px solid #000;"></div><div class="t" style="left:2173px;top:1205.1px;width:73.6px;height:20.3px;display:flex;align-items:center;justify-content:center;font-size:16px;color:#111;letter-spacing:0.3px;-webkit-text-stroke:0.3px #111;">34</div>
<div style="left:2254px;top:1205.1px;width:33.0px;height:20.3px;background:#3e3e3e;border:1.5px solid #000;"></div><div class="t" style="left:2254px;top:1205.1px;width:33.0px;height:20.3px;display:flex;align-items:center;justify-content:center;font-size:16px;color:#dedede;letter-spacing:0.3px;-webkit-text-stroke:0.3px #dedede;">S</div>
<div style="left:1796px;top:1233.7px;width:247px;height:27.3px;background:#5ef5e0;"></div>
<svg style="left:1800.0px;top:1236.4px" width="22" height="22"><circle cx="11" cy="11" r="9.2" stroke="#074a44" stroke-width="1.7" fill="none"/><path d="M8.2 6.5 L15.2 11 L8.2 15.5 Z" fill="#074a44"/></svg>
<div class="t" style="left:1836px;top:1240.2px;font-size:15.5px;font-weight:bold;color:#074a44;">Master</div>
<div style="left:2045px;top:1233.7px;width:119.59999999999991px;height:27.3px;background:#383838;"></div>
<div style="left:2168px;top:1233.7px;width:184px;height:27.3px;background:#383838;"></div>
<div style="left:2337px;top:1234.7px;width:5px;height:25.3px;background:#050505;"></div>
<div style="left:2343.5px;top:1234.7px;width:5.5px;height:25.3px;background:#050505;"></div>
<div style="left:2337px;top:1236.7px;width:12px;height:1.2px;background:#3a3a3a;"></div>
<div style="left:2049px;top:1237.4px;width:112.5px;height:20.3px;background:#1c1c1c;border:1.5px solid #000;"></div><div class="t" style="left:2066px;top:1237.4px;width:78.5px;height:20.3px;display:flex;align-items:center;justify-content:flex-start;font-size:16px;color:#dedede;letter-spacing:0.3px;-webkit-text-stroke:0.3px #dedede;">1/2</div>
<div style="left:2052.5px;top:1240.2px;width:2.5px;height:15px;background:#080808;"></div>
<div style="left:2056px;top:1240.2px;width:2.5px;height:15px;background:#080808;"></div>
<svg style="left:2145px;top:1241.7px" width="14" height="12"><path d="M1 1 H13 L7 10.5 Z" fill="#e0e0e0"/></svg>
<div style="left:2173px;top:1237.4px;width:73.6px;height:20.3px;background:linear-gradient(90deg,#167a88 0 60px,#222 60px);border:1.5px solid #000;"></div><div class="t" style="left:2173px;top:1237.4px;width:73.6px;height:20.3px;display:flex;align-items:center;justify-content:center;font-size:16px;color:#dedede;letter-spacing:0.3px;-webkit-text-stroke:0.3px #dedede;">0</div>
<div style="left:2254px;top:1237.4px;width:73.6px;height:20.3px;background:linear-gradient(90deg,#3a86e2 0 60px,#222 60px);border:1.5px solid #000;"></div><div class="t" style="left:2254px;top:1237.4px;width:73.6px;height:20.3px;display:flex;align-items:center;justify-content:center;font-size:16px;color:#dedede;letter-spacing:0.3px;-webkit-text-stroke:0.3px #dedede;">0</div>
<div style="left:2370px;top:254px;width:11px;height:481px;background:#454545;border-radius:5.5px;"></div>
<div style="left:2364.4px;top:1133.7px;width:21.2px;height:21.2px;background:#f39a2a;border-radius:50%;"></div>
<div class="t" style="left:2364.4px;top:1133.7px;width:21.2px;height:21.2px;display:flex;align-items:center;justify-content:center;font-size:10px;font-weight:bold;color:#151515;">I·O</div>
<div style="left:2364.4px;top:1164.3000000000002px;width:21.2px;height:21.2px;background:#8a8a8a;border-radius:50%;"></div>
<div class="t" style="left:2364.4px;top:1164.3px;width:21.2px;height:21.2px;display:flex;align-items:center;justify-content:center;font-size:12px;font-weight:bold;color:#151515;">R</div>
<div style="left:2364.4px;top:1195.0px;width:21.2px;height:21.2px;background:#f39a2a;border-radius:50%;"></div>
<div class="t" style="left:2364.4px;top:1195.0px;width:21.2px;height:21.2px;display:flex;align-items:center;justify-content:center;font-size:12px;font-weight:bold;color:#151515;">M</div>
<div style="left:2364.4px;top:1225.6000000000001px;width:21.2px;height:21.2px;background:#6a6a6a;border-radius:50%;"></div>
<div class="t" style="left:2364.4px;top:1225.6px;width:21.2px;height:21.2px;display:flex;align-items:center;justify-content:center;font-size:12px;font-weight:bold;color:#151515;">D</div>
<div style="left:150px;top:1305.5px;width:1620px;height:28px;background:#3b3b3b;border:2px solid #1e1e1e;border-radius:3px;"></div>
<div class="t" style="left:163px;top:1311px;font-size:16px;font-weight:bold;letter-spacing:0.45px;color:#e2e2e2;">Insert Mark 111.1.1 (Time: 3:27:874)</div>
<div style="left:1788px;top:1303px;width:328px;height:31.5px;background:#1e1e1e;border-radius:3px;"></div>
<div style="left:1792px;top:1306px;width:321px;height:5.5px;background:#474747;"></div>
<div style="left:1792px;top:1314.5px;width:321px;height:11px;background:#474747;"></div>
<div style="left:1792px;top:1328px;width:321px;height:4.5px;background:#474747;"></div>
<div style="left:2132px;top:1303px;width:220px;height:31.5px;background:#1b1b1b;border-radius:4px;"></div>
<div class="t" style="left:2138px;top:1312.5px;font-size:16px;font-weight:bold;letter-spacing:0.25px;color:#e6e6e6;">54-Wide Awake - Vox - Pre</div>
<div style="left:2367px;top:1305px;width:28px;height:28px;background:#1e1e1e;border-radius:50%;"></div>
<svg style="left:2367px;top:1305px" width="28" height="28"><path d="M19 7 L7 14 L19 21 Z" fill="#3a3a3a"/></svg>
</body></html>
